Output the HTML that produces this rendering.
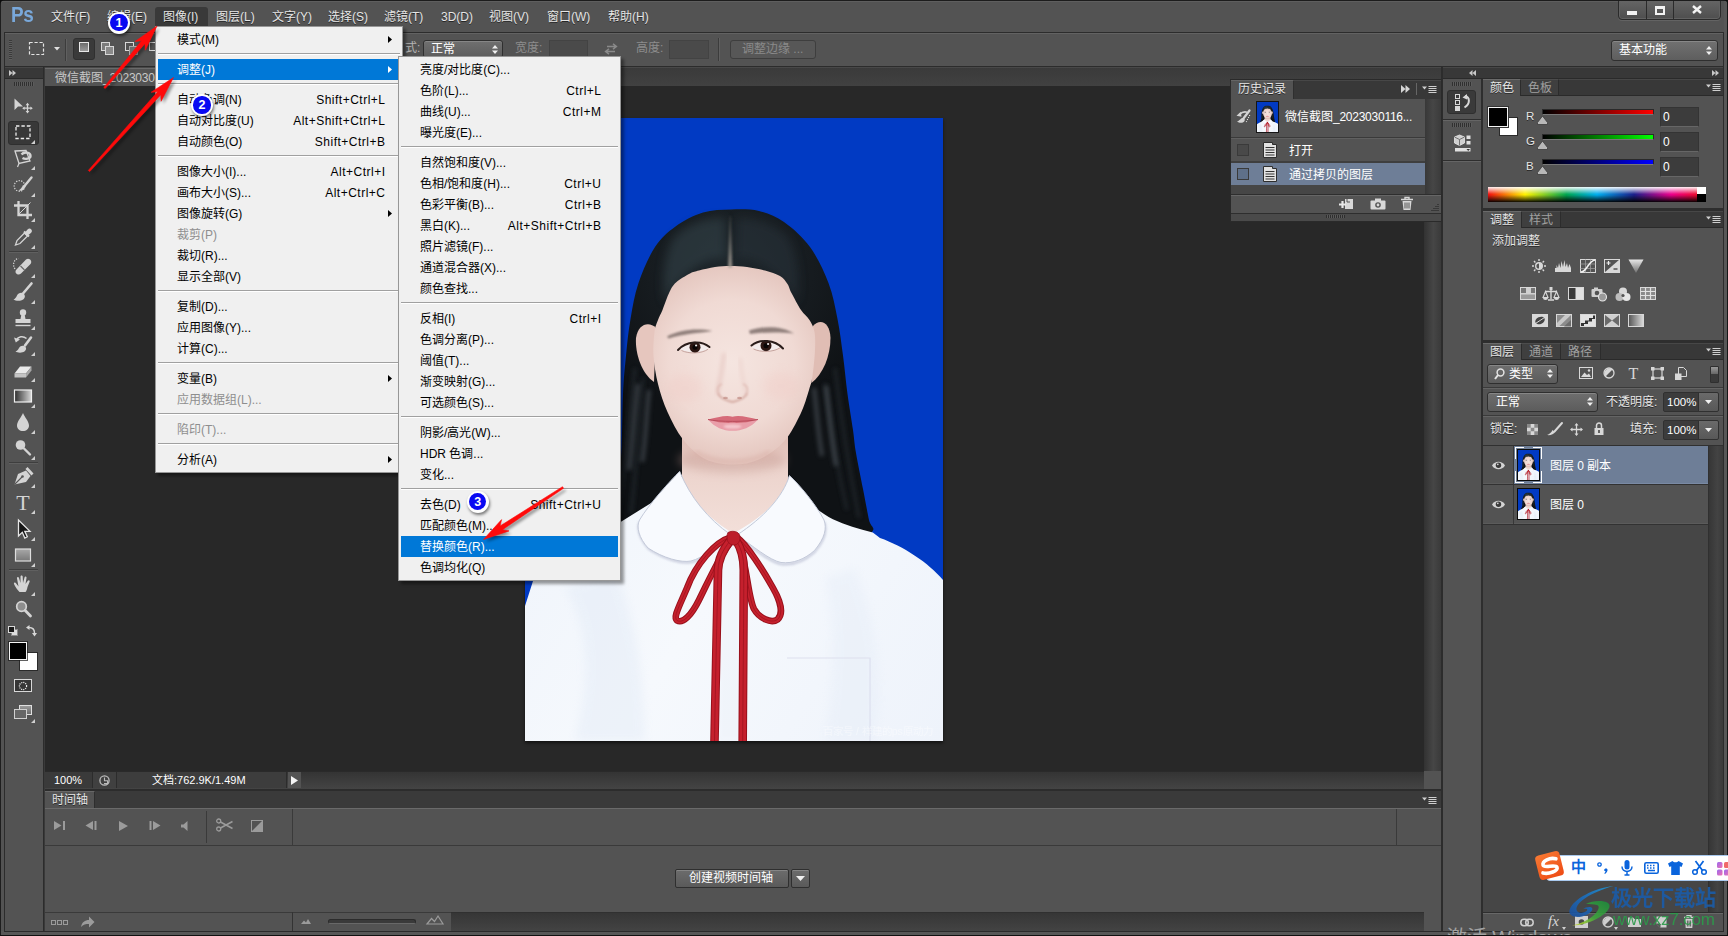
<!DOCTYPE html>
<html lang="zh-CN"><head><meta charset="utf-8"><title>Photoshop</title>
<style>
*{box-sizing:border-box;margin:0;padding:0}
html,body{width:1728px;height:936px;overflow:hidden;background:#535353}
body{position:relative;font-family:"Liberation Sans",sans-serif;font-size:12px;color:#dedede}
.a{position:absolute}
.t{line-height:16px;height:16px;white-space:nowrap}
i{display:inline-block;width:1em;text-align:center;font-style:normal}
.m{color:#e6e6e6;text-shadow:0 1px 0 rgba(0,0,0,.55)}
.k{color:#000}
.d{color:#8e8e8e}
.w{color:#fff}
.g{color:#b4b4b4}
svg{overflow:visible}
</style></head><body>

<!-- p_frame -->
<div class="a" style="left:0px;top:0px;width:1728px;height:936px;background:#535353"></div>
<div class="a" style="left:45px;top:86px;width:1379px;height:685px;background:#282828"></div>
<div class="a" style="left:11px;top:2px;font-size:22px;line-height:26px;font-weight:bold;color:#79a8da;letter-spacing:-0.5px;transform:scaleX(.86);transform-origin:0 0">Ps</div>
<div class="a" style="left:155px;top:7px;width:53px;height:19px;background:#393939;border-radius:3px 3px 0 0"></div>
<div class="a t m" style="left:51px;top:9px;"><i>文</i><i>件</i>(F)</div>
<div class="a t m" style="left:107px;top:9px;"><i>编</i><i>辑</i>(E)</div>
<div class="a t m" style="left:163px;top:9px;"><i>图</i><i>像</i>(I)</div>
<div class="a t m" style="left:216px;top:9px;"><i>图</i><i>层</i>(L)</div>
<div class="a t m" style="left:272px;top:9px;"><i>文</i><i>字</i>(Y)</div>
<div class="a t m" style="left:328px;top:9px;"><i>选</i><i>择</i>(S)</div>
<div class="a t m" style="left:384px;top:9px;"><i>滤</i><i>镜</i>(T)</div>
<div class="a t m" style="left:441px;top:9px;">3D(D)</div>
<div class="a t m" style="left:489px;top:9px;"><i>视</i><i>图</i>(V)</div>
<div class="a t m" style="left:547px;top:9px;"><i>窗</i><i>口</i>(W)</div>
<div class="a t m" style="left:608px;top:9px;"><i>帮</i><i>助</i>(H)</div>
<div class="a" style="left:1618px;top:-3px;width:103px;height:23px;background:linear-gradient(#686868,#4e4e4e);border:1px solid #2b2b2b;border-radius:0 0 4px 4px;box-shadow:inset 0 0 0 1px #626262,0 1px 0 #636363"></div>
<div class="a" style="left:1646px;top:0px;width:1px;height:19px;background:#2b2b2b"></div>
<div class="a" style="left:1673px;top:0px;width:1px;height:19px;background:#2b2b2b"></div>
<div class="a" style="left:1627px;top:11px;width:10px;height:4px;background:#f2f2f2"></div>
<div class="a" style="left:1655px;top:6px;width:10px;height:9px;border:2px solid #f2f2f2;border-top-width:3px"></div>
<svg class="a" style="left:1692px;top:5px;" width="10" height="9" viewBox="0 0 10 9"><path d="M1 1 L9 8 M9 1 L1 8" stroke="#f2f2f2" stroke-width="2.4" fill="none"/></svg>
<div class="a" style="left:4px;top:32px;width:1720px;height:35px;background:#535353;border:1px solid #2c2c2c"></div>
<div class="a" style="left:5px;top:33px;width:1718px;height:1px;background:#626262"></div>
<div class="a" style="left:9px;top:40px;width:3px;height:20px;background:repeating-linear-gradient(#3a3a3a 0 1px,#5e5e5e 1px 2px)"></div>
<svg class="a" style="left:29px;top:42px;" width="15" height="13" viewBox="0 0 15 13"><rect x=".5" y=".5" width="14" height="12" fill="none" stroke="#e4e4e4" stroke-width="1.2" stroke-dasharray="3.2 1.8"/></svg>
<svg class="a" style="left:54px;top:47px;" width="6" height="4" viewBox="0 0 6 4"><path d="M0 0H6L3 3.600Z" fill="#e0e0e0"/></svg>
<div class="a" style="left:65px;top:39px;width:1px;height:22px;background:#3c3c3c"></div>
<div class="a" style="left:66px;top:39px;width:1px;height:22px;background:#606060"></div>
<div class="a" style="left:73px;top:38px;width:22px;height:22px;background:#3a3a3a;border-radius:3px;border:1px solid #303030"></div>
<div class="a" style="left:79px;top:42px;width:10px;height:10px;background:linear-gradient(#6c6c6c,#9a9a9a);border:1px solid #e8e8e8"></div>
<div class="a" style="left:101px;top:42px;width:9px;height:9px;background:#7c7c7c;border:1px solid #d8d8d8"></div>
<div class="a" style="left:105px;top:46px;width:9px;height:9px;background:#8a8a8a;border:1px solid #d8d8d8"></div>
<div class="a" style="left:125px;top:42px;width:9px;height:9px;background:#535353;border:1px solid #d8d8d8"></div>
<div class="a" style="left:129px;top:46px;width:9px;height:9px;background:#6c6c6c;border:1px solid #a8a8a8"></div>
<div class="a" style="left:149px;top:42px;width:9px;height:9px;background:#535353;border:1px solid #d8d8d8"></div>
<div class="a t g" style="left:405px;top:40px;"><i>式</i>:</div>
<div class="a" style="left:423px;top:40px;width:80px;height:18px;background:linear-gradient(#707070,#5d5d5d);border:1px solid #2f2f2f;border-radius:3px;box-shadow:inset 0 1px 0 #868686"></div>
<div class="a t w" style="left:431px;top:41px;"><i>正</i><i>常</i></div>
<svg class="a" style="left:492px;top:45px;" width="6" height="9" viewBox="0 0 6 9"><path d="M0 3.5L3 0L6 3.5ZM0 5.5L3 9L6 5.5Z" fill="#f0f0f0"/></svg>
<div class="a t" style="left:515px;top:40px;color:#8d8d8d"><i>宽</i><i>度</i>:</div>
<div class="a" style="left:549px;top:40px;width:39px;height:19px;background:#4a4a4a;border:1px solid #434343"></div>
<svg class="a" style="left:604px;top:43px;" width="14" height="12" viewBox="0 0 14 12"><path d="M3 3.5H12M9 .8L12.4 3.5L9 6.2M11 8.5H2M5 5.8L1.6 8.5L5 11.2" stroke="#8a8a8a" stroke-width="1.5" fill="none"/></svg>
<div class="a t" style="left:636px;top:40px;color:#8d8d8d"><i>高</i><i>度</i>:</div>
<div class="a" style="left:669px;top:40px;width:40px;height:19px;background:#4a4a4a;border:1px solid #434343"></div>
<div class="a" style="left:718px;top:38px;width:1px;height:23px;background:#3c3c3c"></div>
<div class="a" style="left:719px;top:38px;width:1px;height:23px;background:#606060"></div>
<div class="a" style="left:730px;top:40px;width:86px;height:19px;background:#575757;border:1px solid #3e3e3e;border-radius:3px"></div>
<div class="a t" style="left:742px;top:41px;color:#8a8a8a"><i>调</i><i>整</i><i>边</i><i>缘</i> ...</div>
<div class="a" style="left:1611px;top:40px;width:107px;height:21px;background:linear-gradient(#717171,#5e5e5e);border:1px solid #2f2f2f;border-radius:3px;box-shadow:inset 0 1px 0 #888"></div>
<div class="a t w" style="left:1619px;top:42px;"><i>基</i><i>本</i><i>功</i><i>能</i></div>
<svg class="a" style="left:1706px;top:46px;" width="6" height="9" viewBox="0 0 6 9"><path d="M0 3.5L3 0L6 3.5ZM0 5.5L3 9L6 5.5Z" fill="#f0f0f0"/></svg>
<!-- p_doc -->
<div class="a" style="left:43px;top:67px;width:2px;height:864px;background:#3a3a3a"></div>
<div class="a" style="left:43px;top:67px;width:1px;height:864px;background:#2c2c2c"></div>
<div class="a" style="left:45px;top:67px;width:1396px;height:19px;background:linear-gradient(#3a3a3a,#414141)"></div>
<div class="a" style="left:45px;top:67px;width:1396px;height:1px;background:#484848"></div>
<div class="a" style="left:45px;top:68px;width:130px;height:18px;background:#535353;border-top:1px solid #6a6a6a"></div>
<div class="a t" style="left:55px;top:70px;color:#c8c8c8;letter-spacing:-.2px"><i>微</i><i>信</i><i>截</i><i>图</i>_2023030116...</div>
<div class="a" style="left:1424px;top:86px;width:17px;height:685px;background:linear-gradient(90deg,#323232,#464646 55%,#3a3a3a)"></div>
<div class="a" style="left:1441px;top:67px;width:2px;height:865px;background:#2c2c2c"></div>
<div class="a" style="left:45px;top:771px;width:1379px;height:18px;background:linear-gradient(#333,#444)"></div>
<div class="a" style="left:45px;top:771px;width:1396px;height:1px;background:#2a2a2a"></div>
<div class="a" style="left:45px;top:772px;width:48px;height:16px;background:#3a3a3a;border-right:1px solid #2c2c2c"></div>
<div class="a t w" style="left:54px;top:772px;font-size:11px">100%</div>
<div class="a" style="left:93px;top:772px;width:23px;height:16px;background:#404040"></div>
<svg class="a" style="left:99px;top:775px;" width="11" height="11" viewBox="0 0 11 11"><circle cx="5.5" cy="5.5" r="4.6" fill="none" stroke="#bdbdbd" stroke-width="1.3"/><path d="M5.5 2.5V5.8H8.6V8.6H5" fill="none" stroke="#bdbdbd" stroke-width="1.1"/></svg>
<div class="a" style="left:116px;top:772px;width:171px;height:16px;background:#3d3d3d;border-left:1px solid #2c2c2c;border-right:1px solid #2c2c2c"></div>
<div class="a t w" style="left:152px;top:772px;font-size:11px"><i>文</i><i>档</i>:762.9K/1.49M</div>
<div class="a" style="left:288px;top:772px;width:13px;height:16px;background:#535353"></div>
<svg class="a" style="left:291px;top:776px;" width="7" height="9" viewBox="0 0 7 9"><path d="M0 0L7 4.5L0 9Z" fill="#f4f4f4"/></svg>
<div class="a" style="left:1424px;top:771px;width:17px;height:18px;background:#535353"></div>
<div class="a" style="left:45px;top:789px;width:1396px;height:2px;background:#2c2c2c"></div>
<div class="a" style="left:1230px;top:79px;width:212px;height:143px;background:#2a2a2a"></div>
<div class="a" style="left:1231px;top:80px;width:210px;height:19px;background:#383838;border-top:1px solid #474747"></div>
<div class="a" style="left:1231px;top:80px;width:63px;height:19px;background:#535353;border-right:1px solid #2f2f2f;border-top:1px solid #656565"></div>
<div class="a t m" style="left:1238px;top:81px;"><i>历</i><i>史</i><i>记</i><i>录</i></div>
<svg class="a" style="left:1401px;top:85px;" width="9" height="8" viewBox="0 0 9 8"><path d="M0 0L4.5 4L0 8ZM4.5 0L9 4L4.5 8Z" fill="#d6d6d6"/></svg>
<div class="a" style="left:1416px;top:83px;width:1px;height:12px;background:#666"></div>
<svg class="a" style="left:1422px;top:86px;" width="15" height="8" viewBox="0 0 15 8"><path d="M0 .5H5L2.500 3.500Z" fill="#cfcfcf"/><path d="M6.500 .5H14.500M6.500 2.500H14.500M6.500 4.500H14.500M6.500 6.500H14.500" stroke="#cfcfcf" stroke-width="1"/></svg>
<div class="a" style="left:1231px;top:99px;width:194px;height:96px;background:#464646"></div>
<div class="a" style="left:1231px;top:99px;width:194px;height:86px;background:#535353"></div>
<div class="a" style="left:1425px;top:99px;width:16px;height:96px;background:linear-gradient(90deg,#383838,#464646 50%,#3b3b3b)"></div>
<div class="a" style="left:1231px;top:137px;width:194px;height:2px;background:#3a3a3a;border-bottom:1px solid #606060"></div>
<svg class="a" style="left:1236px;top:109px;" width="16" height="16" viewBox="0 0 16 16"><path d="M13.500 1.500L7.800 9" stroke="#d4d4d4" stroke-width="2.300" stroke-linecap="round"/><path d="M1 12.500C3 12 4 10.500 5.500 9.300C7.200 8.200 9.300 9.500 8.700 11.500C8 13.800 4 14.800 1 12.500Z" fill="#d4d4d4"/><path d="M3.500 5.500C6 3 9 2.600 11 3.200" stroke="#d4d4d4" stroke-width="1.700" fill="none"/><path d="M.5 6.800L4.800 2.800L5.500 7.800Z" fill="#d4d4d4"/><path d="M13.800 6L10 13.500" stroke="#e8e8e8" stroke-width="1.100" stroke-dasharray="1 1.300"/></svg>
<svg class="a" style="left:1256px;top:101px" width="23" height="32" viewBox="0 0 418 623" preserveAspectRatio="none"><use href="#photo"/></svg>
<svg class="a" style="left:1256px;top:101px;" width="23" height="32" viewBox="0 0 23 32"><path d="M11.400 21.700L9.300 25M11.400 21.700L13.400 25" stroke="#c21a2a" stroke-width=".6" fill="none" opacity=".7"/></svg>
<div class="a" style="left:1256px;top:101px;width:23px;height:32px;border:1px solid #151515"></div>
<div class="a t w" style="left:1285px;top:109px;letter-spacing:-.25px"><i>微</i><i>信</i><i>截</i><i>图</i>_2023030116...</div>
<div class="a" style="left:1237px;top:144px;width:12px;height:12px;background:#494949;border:1px solid #3a3a3a"></div>
<svg class="a" style="left:1263px;top:142px;" width="14" height="16" viewBox="0 0 14 16"><path d="M.5 .5H9.5V2.500H13.5V15.5H.5Z" fill="#e2e2e2" stroke="#2e2e2e"/><path d="M2.500 5.500H11.5M2.500 8H11.5M2.500 10.500H11.5M2.500 13H11.5" stroke="#333" stroke-width="1"/></svg>
<div class="a t w" style="left:1289px;top:143px;"><i>打</i><i>开</i></div>
<div class="a" style="left:1231px;top:163px;width:194px;height:22px;background:#6e7e97"></div>
<div class="a" style="left:1237px;top:168px;width:12px;height:12px;background:#5f7089;border:1px solid #3a3a3a"></div>
<svg class="a" style="left:1263px;top:166px;" width="14" height="16" viewBox="0 0 14 16"><path d="M.5 .5H9.5V2.500H13.5V15.5H.5Z" fill="#e2e2e2" stroke="#2e2e2e"/><path d="M2.500 5.500H11.5M2.500 8H11.5M2.500 10.500H11.5M2.500 13H11.5" stroke="#333" stroke-width="1"/></svg>
<div class="a t w" style="left:1289px;top:167px;"><i>通</i><i>过</i><i>拷</i><i>贝</i><i>的</i><i>图</i><i>层</i></div>
<div class="a" style="left:1231px;top:161px;width:194px;height:2px;background:#3f3f3f"></div>
<div class="a" style="left:1231px;top:194px;width:210px;height:1px;background:#2e2e2e"></div>
<div class="a" style="left:1231px;top:195px;width:210px;height:18px;background:#535353;border-top:1px solid #666"></div>
<svg class="a" style="left:1339px;top:198px;" width="15" height="12" viewBox="0 0 15 12"><path d="M6 1H14V11H6V7" fill="#d8d8d8"/><path d="M3.500 3V10M0 6.500H7" stroke="#e8e8e8" stroke-width="2.2"/><path d="M8 1V4H11" stroke="#535353" fill="none"/></svg>
<svg class="a" style="left:1370px;top:198px;" width="16" height="12" viewBox="0 0 16 12"><rect x=".5" y="2.500" width="15" height="9" rx="1" fill="#d8d8d8"/><rect x="5" y=".5" width="6" height="3" fill="#d8d8d8"/><circle cx="8" cy="7" r="2.800" fill="#535353"/><circle cx="8" cy="7" r="1.400" fill="#d8d8d8"/></svg>
<svg class="a" style="left:1401px;top:197px;" width="12" height="13" viewBox="0 0 12 13"><path d="M0 2.500H12M4 2V.5H8V2" stroke="#d8d8d8" stroke-width="1.4" fill="none"/><path d="M1.5 4H10.5L9.500 13H2.500Z" fill="#d8d8d8"/><path d="M4 5.500V11.5M6 5.500V11.5M8 5.500V11.5" stroke="#535353" stroke-width="1"/></svg>
<svg class="a" style="left:1430px;top:203px;" width="9" height="9" viewBox="0 0 9 9"><path d="M8 1V2M6 3V4M8 3V4M4 5V6M6 5V6M8 5V6M2 7V8M4 7V8M6 7V8M8 7V8" stroke="#1e1e1e" stroke-width="1"/></svg>
<div class="a" style="left:1231px;top:213px;width:210px;height:8px;background:#4a4a4a;border-top:1px solid #2e2e2e"></div>
<div class="a" style="left:1326px;top:215px;width:19px;height:3px;background:repeating-linear-gradient(90deg,#2e2e2e 0 1px,#5a5a5a 1px 2px)"></div>
<!-- p_photo -->
<svg width="0" height="0" style="position:absolute;left:0;top:0"><defs>
<radialGradient id="gF" cx="207" cy="245" r="105" gradientUnits="userSpaceOnUse"><stop offset="0" stop-color="#f5e5e0"/><stop offset=".6" stop-color="#f0dad4"/><stop offset="1" stop-color="#e3c4bc"/></radialGradient>
<linearGradient id="gN" x1="0" y1="325" x2="0" y2="415" gradientUnits="userSpaceOnUse"><stop offset="0" stop-color="#e2c1b9"/><stop offset=".3" stop-color="#ecd4cd"/><stop offset="1" stop-color="#f3dfd9"/></linearGradient>
<linearGradient id="gS" x1="0" y1="350" x2="418" y2="623" gradientUnits="userSpaceOnUse"><stop offset="0" stop-color="#eff4fb"/><stop offset=".45" stop-color="#f6f9fd"/><stop offset="1" stop-color="#eef3fb"/></linearGradient>
<radialGradient id="gH" cx="205" cy="150" r="150" gradientUnits="userSpaceOnUse"><stop offset="0" stop-color="#1e262b"/><stop offset=".55" stop-color="#161b1f"/><stop offset="1" stop-color="#0f1215"/></radialGradient>
<linearGradient id="gP" x1="0" y1="100" x2="0" y2="148" gradientUnits="userSpaceOnUse"><stop offset="0" stop-color="#7c7a72" stop-opacity=".25"/><stop offset="1" stop-color="#a39c94" stop-opacity=".85"/></linearGradient><linearGradient id="gR" x1="0" x2="1" y1="0" y2="0"><stop offset="0" stop-color="#a3111d"/><stop offset=".5" stop-color="#d82c3a"/><stop offset="1" stop-color="#a3111d"/></linearGradient>
<filter id="bl2" x="-30%" y="-30%" width="160%" height="160%"><feGaussianBlur stdDeviation="2.2"/></filter>
<filter id="bl5" x="-50%" y="-50%" width="200%" height="200%"><feGaussianBlur stdDeviation="5"/></filter>
<filter id="blp" filterUnits="userSpaceOnUse" x="190" y="85" width="34" height="75"><feGaussianBlur stdDeviation=".9"/></filter><filter id="bl1" x="-30%" y="-30%" width="160%" height="160%"><feGaussianBlur stdDeviation=".8"/></filter>
<symbol id="photo" viewBox="0 0 418 623" preserveAspectRatio="none">
<rect width="418" height="623" fill="#013ac3"/>
<path d="M206.0 91.5C215.3 91.2 225.2 90.9 234.0 93.0C242.8 95.1 250.5 98.0 259.0 104.0C267.5 110.0 277.6 118.8 285.0 129.0C292.4 139.2 298.9 153.0 303.5 165.0C308.1 177.0 310.1 188.9 312.5 201.0C314.9 213.1 316.3 225.0 318.0 237.5C319.7 250.0 320.8 263.6 322.5 276.0C324.2 288.4 326.6 302.2 328.0 312.0C329.4 321.8 329.3 325.2 331.0 335.0C332.7 344.8 335.8 359.8 338.0 371.0C340.2 382.2 342.5 394.8 344.0 402.0C345.5 409.2 351.0 409.3 347.0 414.0C343.0 418.7 343.3 424.8 320.0 430.0C296.7 435.2 243.7 445.0 207.0 445.0C170.3 445.0 122.5 434.8 100.0 430.0C77.5 425.2 75.3 421.7 72.0 416.0C68.7 410.3 77.0 404.0 80.0 396.0C83.0 388.0 87.3 377.3 90.0 368.0C92.7 358.7 94.7 355.3 96.0 340.0C97.3 324.7 97.2 293.1 98.0 276.0C98.8 258.9 99.8 250.0 101.0 237.5C102.2 225.0 103.4 213.1 105.5 201.0C107.6 188.9 109.4 177.0 113.5 165.0C117.6 153.0 123.8 138.4 130.0 129.0C136.2 119.6 142.5 114.2 150.5 108.4C158.5 102.7 168.8 97.3 178.0 94.5C187.2 91.7 196.7 91.8 206.0 91.5Z" fill="url(#gH)"/>
<path d="M150 118C165 104 185 99 200 100L201 140C185 138 160 150 140 185C136 160 140 132 150 118Z" fill="#34444c" opacity=".55" filter="url(#bl5)"/>
<path d="M262 118C247 104 227 99 212 100L211 140C227 138 252 150 272 185C276 160 272 132 262 118Z" fill="#2a363d" opacity=".5" filter="url(#bl5)"/>
<path d="M110 250C104 300 100 340 92 400M118 260C112 320 112 350 106 395M310 250C316 300 322 340 334 400M300 265C308 320 312 350 322 392" stroke="#2a3338" stroke-width="3" fill="none" opacity=".6" filter="url(#bl2)"/>
<path d="M113 266C109 295 108 320 104 352M124 272C121 298 121 320 117 344M289 270C292 295 293 315 297 338M301 268C304 295 306 320 311 348" stroke="#5a626a" stroke-width="4.500" fill="none" opacity=".5" filter="url(#bl2)"/>
<path d="M157 300V425H263V300Z" fill="url(#gN)"/>
<ellipse cx="207" cy="342" rx="54" ry="13" fill="#c0938a" opacity=".38" filter="url(#bl5)"/>
<path d="M0 488L8 463C32 437 78 414 96.400 403.400L131 382L154.700 353.400C160 374 180 399 208.500 415.500C242 397 260 377 264.400 357.600C268 368 274 378 281.500 383.700C292 391.500 300 397 307.900 401.300C320 407 334 411 347.800 414.500L355 420C378 428 404 445 418 462V623H0Z" fill="url(#gS)"/>
<path d="M40 470C70 520 60 580 50 623H120C120 560 110 500 90 450Z" fill="#dfe8f5" opacity=".4" filter="url(#bl5)"/>
<path d="M330 450C350 500 360 560 350 623H300C310 560 310 500 300 460Z" fill="#e2eaf6" opacity=".35" filter="url(#bl5)"/>
<path d="M193 425V623H216V425Z" fill="#e8eef8" opacity=".25" filter="url(#bl2)"/>
<path d="M262 540H345V623" fill="none" stroke="#dde0ee" stroke-width="1.2"/>
<path d="M114.500 404C112 412 116 422 124 431C139 441 157 446 167 444C179 441 193 429 205 418M299 404C302 412 300 422 289.500 434C280 442.500 268 447.500 256 446C244 443.500 228 429.500 211 418" fill="none" stroke="#b9bdd2" stroke-width="2.500" opacity=".7" filter="url(#bl1)"/>
<path d="M154.700 353.400C146 362 124 386 114.500 402C111 409 114 420 123 430C138 440 156 445 166 443C178 440 192 428 206 417C183 401 165 379 154.700 353.400Z" fill="#f8fafe" stroke="#c3c9d9" stroke-width="1"/>
<path d="M264.400 357.600C274 366 292 388 299 402C302 410 300 420 289.500 432.500C280 441 268 446 256 444.500C244 442 228 428 212 417C238 400 258 379 264.400 357.600Z" fill="#f8fafe" stroke="#c3c9d9" stroke-width="1"/>
<path d="M131 210C124 203 113 206 111 220C110 236 117 256 129 264Z" fill="#e6c6be"/>
<path d="M288 208C295 200 305 204 305.500 220C305.500 238 298 256 286.500 265Z" fill="#e0bdb4"/>
<path d="M205.5 148.0C210.8 148.0 216.2 148.2 222.0 149.0C227.8 149.8 234.5 151.0 240.0 152.5C245.5 154.0 251.2 155.8 255.0 158.0C258.8 160.2 260.6 163.2 262.5 166.0C264.4 168.8 264.2 170.7 266.5 175.0C268.8 179.3 273.0 187.5 276.0 192.0C279.0 196.5 282.2 198.3 284.5 202.0C286.8 205.7 288.6 209.0 289.5 214.0C290.4 219.0 290.3 224.7 290.0 232.0C289.7 239.3 288.5 251.3 287.5 258.0C286.5 264.7 286.0 265.7 284.0 272.0C282.0 278.3 279.7 287.4 275.5 296.0C271.3 304.6 265.9 315.9 259.0 323.5C252.1 331.1 242.6 337.7 234.0 341.5C225.4 345.3 216.5 346.6 207.5 346.5C198.5 346.4 188.2 345.2 180.0 341.0C171.8 336.8 164.2 329.3 158.0 321.5C151.8 313.7 146.7 303.2 142.5 294.0C138.3 284.8 135.3 275.3 133.0 266.0C130.7 256.7 129.1 246.7 128.5 238.0C127.9 229.3 128.8 220.0 129.5 214.0C130.2 208.0 131.7 205.7 133.0 202.0C134.3 198.3 135.6 196.7 137.5 192.0C139.4 187.3 142.2 178.6 144.5 174.0C146.8 169.4 147.6 167.6 151.0 164.5C154.4 161.4 161.2 157.5 165.0 155.5C168.8 153.5 169.8 153.6 174.0 152.5C178.2 151.4 184.8 149.8 190.0 149.0C195.2 148.2 200.2 148.0 205.5 148.0Z" fill="url(#gF)"/>
<path d="M204.500 98L205.700 98L207.300 149.500L203 149.500Z" fill="url(#gP)" filter="url(#blp)"/>
<ellipse cx="160" cy="270" rx="18" ry="14" fill="#f0bdb8" opacity=".2" filter="url(#bl5)"/><ellipse cx="256" cy="268" rx="18" ry="14" fill="#f0bdb8" opacity=".2" filter="url(#bl5)"/>
<path d="M142 218.500C155 211.500 172 210 187.500 213C174 215 157 216 143.500 220.500Z" fill="#6b5c58" opacity=".72" filter="url(#bl1)"/>
<path d="M224 212.500C238 208 256 207.500 269 215.500C256 214 240 214 225 216Z" fill="#6b5c58" opacity=".72" filter="url(#bl1)"/>
<path d="M155.0 231.0C161.5 224.0 176.5 223.5 183.5 230.5C176.5 235.0 162.5 235.5 155.0 231.0Z" fill="#f3ecec"/>
<circle cx="170.0" cy="229.2" r="5.500" fill="#2c1612"/><circle cx="170.0" cy="229.2" r="2.500" fill="#080404"/><circle cx="171.1" cy="227.5" r="1.100" fill="#fff" opacity=".9"/>
<path d="M153.0 232.0C161.5 223.0 176.5 222.3 184.5 229.0" stroke="#2a1d1b" stroke-width="2" fill="none" stroke-linecap="round"/>
<path d="M156.5 232.5C163.5 236.0 176.5 235.8 183.0 231.3" stroke="#b48e88" stroke-width=".9" fill="none" opacity=".8"/>
<path d="M227.0 229.5C233.5 222.5 248.5 222 255.5 229C248.5 233.5 234.5 234 227.0 229.5Z" fill="#f3ecec"/>
<circle cx="241.0" cy="227.7" r="5.500" fill="#2c1612"/><circle cx="241.0" cy="227.7" r="2.500" fill="#080404"/><circle cx="243.1" cy="226" r="1.100" fill="#fff" opacity=".9"/>
<path d="M258.0 230.5C249.5 221.5 234.5 220.8 226.5 227.5" stroke="#2a1d1b" stroke-width="2" fill="none" stroke-linecap="round"/>
<path d="M228.5 231C235.5 234.5 248.5 234.3 255.0 229.8" stroke="#b48e88" stroke-width=".9" fill="none" opacity=".8"/>
<path d="M193 275C195 281 200.500 281.500 204 283C206 284 209 284 211 283C214.500 281.500 220 281 222 275" stroke="#cfa198" stroke-width="1.500" fill="none" filter="url(#bl1)"/>
<path d="M199 235C197 255 194 268 192 276" stroke="#e6c8c2" stroke-width="3" fill="none" filter="url(#bl2)"/>
<path d="M215 240C216.500 256 219 268 221.500 276" stroke="#ecd2cc" stroke-width="2.500" fill="none" filter="url(#bl2)"/><path d="M194 277C191 272 193 267 197 266M221 277C224 272 222 267 218 266" stroke="#dcb4ac" stroke-width="1.200" fill="none" filter="url(#bl1)"/>
<ellipse cx="200.500" cy="280" rx="2.400" ry="1.200" fill="#b98078" opacity=".6"/><ellipse cx="214.500" cy="280" rx="2.400" ry="1.200" fill="#b98078" opacity=".6"/>
<path d="M183 301.500C192 304 200 305 207.500 304.500C215 305 224 304 233 301.500C226 309.500 217 312.800 207.500 312.800C198 312.800 190 309.500 183 301.500Z" fill="#e99ea9"/>
<path d="M183 301.500C192 299.500 201 296.800 207.500 298.800C214 296.800 224 299.500 233 301.500C224 304.500 215 305.200 207.500 304.800C200 305.200 192 304.500 183 301.500Z" fill="#d66b79"/>
<path d="M183 301.500C193 304 222 304 233 301.500" stroke="#b94c5c" stroke-width="1" fill="none"/>
<ellipse cx="207.500" cy="308.500" rx="9" ry="2" fill="#f8d0d6" opacity=".85" filter="url(#bl1)"/>
<path d="M170 334C190 347 225 347 245 334" stroke="#d9b0a7" stroke-width="4" fill="none" opacity=".6" filter="url(#bl2)"/>
<path d="M205.500 419.500C190 424 171 446 162 470C154 489 148 499 152 502.500C158 506 166.500 497 174 482C184 462 195 437 206 423.500" stroke="#98101b" stroke-width="6.6" fill="none" stroke-linecap="round"/>
<path d="M205.500 419.500C190 424 171 446 162 470C154 489 148 499 152 502.500C158 506 166.500 497 174 482C184 462 195 437 206 423.500" stroke="#c5202d" stroke-width="4.6" fill="none" stroke-linecap="round"/>
<path d="M205.500 419.500C190 424 171 446 162 470C154 489 148 499 152 502.500C158 506 166.500 497 174 482C184 462 195 437 206 423.500" stroke="#a01420" stroke-width="1" fill="none" opacity=".85"/>
<path d="M212 419.500C222 427 238 452 248 470C256 484 258.500 496 252.500 501.500C246 506 234 500 229 491C223 479 222.500 450 213.500 423" stroke="#98101b" stroke-width="6.6" fill="none" stroke-linecap="round"/>
<path d="M212 419.500C222 427 238 452 248 470C256 484 258.500 496 252.500 501.500C246 506 234 500 229 491C223 479 222.500 450 213.500 423" stroke="#c5202d" stroke-width="4.6" fill="none" stroke-linecap="round"/>
<path d="M212 419.500C222 427 238 452 248 470C256 484 258.500 496 252.500 501.500C246 506 234 500 229 491C223 479 222.500 450 213.500 423" stroke="#a01420" stroke-width="1" fill="none" opacity=".85"/>
<path d="M205 423C198 432 193.500 440 193 452C192 500 190.500 560 189.500 623" stroke="#98101b" stroke-width="8.6" fill="none" stroke-linecap="round"/>
<path d="M205 423C198 432 193.500 440 193 452C192 500 190.500 560 189.500 623" stroke="#c5202d" stroke-width="6.6" fill="none" stroke-linecap="round"/>
<path d="M205 423C198 432 193.500 440 193 452C192 500 190.500 560 189.500 623" stroke="#a01420" stroke-width="1" fill="none" opacity=".85"/>
<path d="M211.500 423C217 432 218.800 440 218.800 452C218.800 500 218 560 217.700 623" stroke="#98101b" stroke-width="8.6" fill="none" stroke-linecap="round"/>
<path d="M211.500 423C217 432 218.800 440 218.800 452C218.800 500 218 560 217.700 623" stroke="#c5202d" stroke-width="6.6" fill="none" stroke-linecap="round"/>
<path d="M211.500 423C217 432 218.800 440 218.800 452C218.800 500 218 560 217.700 623" stroke="#a01420" stroke-width="1" fill="none" opacity=".85"/>
<path d="M203 414.500C206.500 412.500 212 413 214 416C216 419.500 215 424.500 211.500 426.500C207.500 428 203.500 426 202.500 422.500C201.800 419.500 201.800 416.500 203 414.500Z" fill="#bd1d2a" stroke="#98101c" stroke-width=".8"/>
<text x="298" y="617" font-family="Liberation Sans,sans-serif" font-size="10.500" fill="#fff" opacity=".4">百家号 / 祥建的ps原动力</text>
</symbol></defs></svg>
<div class="a" style="left:525px;top:118px;width:418px;height:623px;box-shadow:0 2px 3px rgba(0,0,0,.55);background:#013ac3"></div>
<svg class="a" style="left:525px;top:118px" width="418" height="623" viewBox="0 0 418 623"><use href="#photo"/></svg>
<!-- p_tools -->
<div class="a" style="left:4px;top:67px;width:1px;height:865px;background:#2c2c2c"></div>
<div class="a" style="left:5px;top:67px;width:38px;height:865px;background:#535353"></div>
<div class="a" style="left:5px;top:67px;width:38px;height:12px;background:#383838;border-top:1px solid #474747;border-bottom:1px solid #2a2a2a"></div>
<svg class="a" style="left:9px;top:70px;" width="7" height="6" viewBox="0 0 7 6"><path d="M0 0L3.500 3L0 6ZM3.500 0L7 3L3.500 6Z" fill="#c8c8c8"/></svg>
<div class="a" style="left:14px;top:82px;width:20px;height:4px;background:repeating-linear-gradient(90deg,#303030 0 1px,#5c5c5c 1px 2px)"></div>
<div class="a" style="left:9px;top:251px;width:29px;height:1px;background:#3e3e3e"></div>
<div class="a" style="left:9px;top:252px;width:29px;height:1px;background:#606060"></div>
<div class="a" style="left:9px;top:462px;width:29px;height:1px;background:#3e3e3e"></div>
<div class="a" style="left:9px;top:463px;width:29px;height:1px;background:#606060"></div>
<div class="a" style="left:9px;top:569px;width:29px;height:1px;background:#3e3e3e"></div>
<div class="a" style="left:9px;top:570px;width:29px;height:1px;background:#606060"></div>
<div class="a" style="left:8px;top:121px;width:31px;height:24px;background:#383838;border-radius:3px;border:1px solid #2f2f2f"></div>
<svg class="a" style="left:11px;top:94px;" width="24" height="24" viewBox="0 0 24 24"><path d="M3.500 4.500V16L7 12.500H12Z" fill="#d4d4d4"/><path d="M16.500 10.500V18M12.800 14.200H20.200" stroke="#d4d4d4" stroke-width="1.300" fill="none"/><path d="M16.500 8.800L14.600 11.300H18.400ZM16.500 19.600L14.600 17.100H18.400ZM11.200 14.200L13.600 12.400V16ZM21.800 14.200L19.400 12.400V16Z" fill="#d4d4d4"/></svg>
<svg class="a" style="left:11px;top:120px;" width="24" height="24" viewBox="0 0 24 24"><rect x="5" y="6" width="14" height="12.500" fill="none" stroke="#ececec" stroke-width="1.300" stroke-dasharray="3.400 2"/></svg>
<svg class="a" style="left:31px;top:140px;" width="4" height="4" viewBox="0 0 4 4"><path d="M4 0V4H0Z" fill="#d0d0d0"/></svg>
<svg class="a" style="left:11px;top:146px;" width="24" height="24" viewBox="0 0 24 24"><path d="M4 5L15 4.500L19 15L8 17.500Z" fill="none" stroke="#d4d4d4" stroke-width="1.300"/><path d="M10.500 8.500C13 5.500 19.500 6 19.500 10C19.500 13 14 13.500 11.500 12" fill="none" stroke="#d4d4d4" stroke-width="2.400"/><path d="M8 17.500L6.500 21" stroke="#d4d4d4" stroke-width="1.200"/></svg>
<svg class="a" style="left:31px;top:166px;" width="4" height="4" viewBox="0 0 4 4"><path d="M4 0V4H0Z" fill="#d0d0d0"/></svg>
<svg class="a" style="left:11px;top:173px;" width="24" height="24" viewBox="0 0 24 24"><circle cx="8.500" cy="13" r="5.300" fill="none" stroke="#d4d4d4" stroke-width="1.200" stroke-dasharray="1.300 1.300"/><path d="M20.500 4.500L13.500 13" stroke="#d4d4d4" stroke-width="2.400" stroke-linecap="round"/><path d="M7.500 17.500C10 18.500 13.500 17 14.500 13.500L12 12C11 14.500 9.500 16.500 7.500 17.500Z" fill="#d4d4d4"/></svg>
<svg class="a" style="left:31px;top:193px;" width="4" height="4" viewBox="0 0 4 4"><path d="M4 0V4H0Z" fill="#d0d0d0"/></svg>
<svg class="a" style="left:11px;top:198px;" width="24" height="24" viewBox="0 0 24 24"><path d="M7.500 3V17H21M3 7.500H16.500V21" fill="none" stroke="#d4d4d4" stroke-width="2.300"/><path d="M19.500 4.500L8 16" stroke="#d4d4d4" stroke-width="1"/></svg>
<svg class="a" style="left:31px;top:218px;" width="4" height="4" viewBox="0 0 4 4"><path d="M4 0V4H0Z" fill="#d0d0d0"/></svg>
<svg class="a" style="left:11px;top:225px;" width="24" height="24" viewBox="0 0 24 24"><path d="M4.500 20L6 15.500L13.500 8L16.500 11L9 18.500Z" fill="none" stroke="#d4d4d4" stroke-width="1.300"/><path d="M13 6.500L18 11.500M14.500 8.500L17.500 5C18.800 3.700 20.800 5.700 19.500 7L16 10Z" stroke="#d4d4d4" stroke-width="2" fill="#d4d4d4"/></svg>
<svg class="a" style="left:31px;top:245px;" width="4" height="4" viewBox="0 0 4 4"><path d="M4 0V4H0Z" fill="#d0d0d0"/></svg>
<svg class="a" style="left:11px;top:254px;" width="24" height="24" viewBox="0 0 24 24"><path d="M5.500 15.500L15 5.500C18 3 22 7 19.500 10L10 19.500C7 22.500 2.500 18.500 5.500 15.500Z" fill="#d4d4d4"/><path d="M9.500 12L13.500 16M8.500 15.500H8.600M11 13.500H11.100M13 11.500H13.100" stroke="#6a6a6a" stroke-width="1.200"/><path d="M4 15C1 11 3 5 7.500 4.500" fill="none" stroke="#d4d4d4" stroke-width="1.200" stroke-dasharray="1.300 1.300"/></svg>
<svg class="a" style="left:31px;top:274px;" width="4" height="4" viewBox="0 0 4 4"><path d="M4 0V4H0Z" fill="#d0d0d0"/></svg>
<svg class="a" style="left:11px;top:280px;" width="24" height="24" viewBox="0 0 24 24"><path d="M20.500 3.500L12 13.500" stroke="#d4d4d4" stroke-width="2.600" stroke-linecap="round"/><path d="M2.500 19.500C4 19 5 17.500 6 15.500C7.500 12.500 11 12 13 14C15 16.500 13.500 19.500 10 20.500C7 21.200 4 20.500 2.500 19.500Z" fill="#d4d4d4"/></svg>
<svg class="a" style="left:31px;top:300px;" width="4" height="4" viewBox="0 0 4 4"><path d="M4 0V4H0Z" fill="#d0d0d0"/></svg>
<svg class="a" style="left:11px;top:306px;" width="24" height="24" viewBox="0 0 24 24"><circle cx="12" cy="6.500" r="3.200" fill="#d4d4d4"/><path d="M10.500 8H13.500L14.500 13H19.500V17H4.500V13H9.500Z" fill="#d4d4d4"/><path d="M4.500 19.500H19.500" stroke="#d4d4d4" stroke-width="1.400"/></svg>
<svg class="a" style="left:31px;top:326px;" width="4" height="4" viewBox="0 0 4 4"><path d="M4 0V4H0Z" fill="#d0d0d0"/></svg>
<svg class="a" style="left:11px;top:332px;" width="24" height="24" viewBox="0 0 24 24"><path d="M20 5.500L14 13.500" stroke="#d4d4d4" stroke-width="2.600" stroke-linecap="round"/><path d="M4.500 19.500C6 19 7 17.800 8 16C9.500 13.500 12.500 13 14.500 15C16 17 14.500 19.500 11.500 20.300C9 21 6 20.500 4.500 19.500Z" fill="#d4d4d4"/><path d="M15.500 6.500C12 3.500 7 4.500 5.500 8" fill="none" stroke="#d4d4d4" stroke-width="1.600"/><path d="M3 5.500L4.800 10.500L9 7.500Z" fill="#d4d4d4"/></svg>
<svg class="a" style="left:31px;top:352px;" width="4" height="4" viewBox="0 0 4 4"><path d="M4 0V4H0Z" fill="#d0d0d0"/></svg>
<svg class="a" style="left:11px;top:358px;" width="24" height="24" viewBox="0 0 24 24"><path d="M3.500 15.500L9 8.500H20.500L15 15.500Z" fill="#eaeaea"/><path d="M3.500 15.500H15V19.500H3.500Z" fill="#c4c4c4"/><path d="M15 15.500L20.500 8.500V12.500L15 19.500Z" fill="#a6a6a6"/></svg>
<svg class="a" style="left:31px;top:378px;" width="4" height="4" viewBox="0 0 4 4"><path d="M4 0V4H0Z" fill="#d0d0d0"/></svg>
<svg class="a" style="left:11px;top:384px;" width="24" height="24" viewBox="0 0 24 24"><defs><linearGradient id="tg" x1="0" x2="1"><stop offset="0" stop-color="#2e2e2e"/><stop offset="1" stop-color="#d8d8d8"/></linearGradient></defs><rect x="3.500" y="6" width="17" height="12" fill="url(#tg)" stroke="#f0f0f0" stroke-width="1.200"/></svg>
<svg class="a" style="left:31px;top:404px;" width="4" height="4" viewBox="0 0 4 4"><path d="M4 0V4H0Z" fill="#d0d0d0"/></svg>
<svg class="a" style="left:11px;top:410px;" width="24" height="24" viewBox="0 0 24 24"><path d="M12 3C13.500 7 18 11.500 18 15.500C18 19 15.300 21 12 21C8.700 21 6 19 6 15.500C6 11.500 10.500 7 12 3Z" fill="#d4d4d4"/></svg>
<svg class="a" style="left:31px;top:430px;" width="4" height="4" viewBox="0 0 4 4"><path d="M4 0V4H0Z" fill="#d0d0d0"/></svg>
<svg class="a" style="left:11px;top:436px;" width="24" height="24" viewBox="0 0 24 24"><circle cx="9.500" cy="9" r="4.800" fill="#d4d4d4"/><path d="M13 12.500L19 18.500" stroke="#d4d4d4" stroke-width="2.400" stroke-linecap="round"/></svg>
<svg class="a" style="left:31px;top:456px;" width="4" height="4" viewBox="0 0 4 4"><path d="M4 0V4H0Z" fill="#d0d0d0"/></svg>
<svg class="a" style="left:11px;top:464px;" width="24" height="24" viewBox="0 0 24 24"><path d="M3.500 20.500L7 10L15 6.500L19.500 12L15 18Z" fill="#d4d4d4"/><path d="M3.500 20.500L11 13" stroke="#555" stroke-width="1.100"/><circle cx="11.500" cy="12.500" r="1.300" fill="#555"/><path d="M15.500 4L21.500 10.500" stroke="#d4d4d4" stroke-width="2.800"/></svg>
<svg class="a" style="left:31px;top:484px;" width="4" height="4" viewBox="0 0 4 4"><path d="M4 0V4H0Z" fill="#d0d0d0"/></svg>
<svg class="a" style="left:11px;top:490px;" width="24" height="24" viewBox="0 0 24 24"><text x="12" y="20" text-anchor="middle" font-family="Liberation Serif,serif" font-size="22" fill="#d4d4d4">T</text></svg>
<svg class="a" style="left:31px;top:510px;" width="4" height="4" viewBox="0 0 4 4"><path d="M4 0V4H0Z" fill="#d0d0d0"/></svg>
<svg class="a" style="left:11px;top:517px;" width="24" height="24" viewBox="0 0 24 24"><path d="M7.500 3V19L11.300 15.300L13.800 21L16.300 19.800L13.800 14.300H19Z" fill="#161616" stroke="#e6e6e6" stroke-width="1.300"/></svg>
<svg class="a" style="left:31px;top:537px;" width="4" height="4" viewBox="0 0 4 4"><path d="M4 0V4H0Z" fill="#d0d0d0"/></svg>
<svg class="a" style="left:11px;top:543px;" width="24" height="24" viewBox="0 0 24 24"><defs><linearGradient id="tr" x1="0" y1="0" x2="0" y2="1"><stop offset="0" stop-color="#a8a8a8"/><stop offset="1" stop-color="#787878"/></linearGradient></defs><rect x="4.500" y="6" width="15" height="12" fill="url(#tr)" stroke="#dedede" stroke-width="1.200"/></svg>
<svg class="a" style="left:31px;top:563px;" width="4" height="4" viewBox="0 0 4 4"><path d="M4 0V4H0Z" fill="#d0d0d0"/></svg>
<svg class="a" style="left:11px;top:572px;" width="24" height="24" viewBox="0 0 24 24"><path d="M8.500 20C6.500 18 4 14.500 3 12C2.500 10.500 4.300 10 5.200 11.500L7.500 14.500L6 6.500C5.700 5 7.600 4.500 8 6L9.500 11L9.500 4.500C9.500 3 11.600 3 11.700 4.500L12 11L13.500 5.500C13.900 4 15.800 4.500 15.500 6L14.500 12L16.800 8.800C17.700 7.600 19.300 8.600 18.500 10L16.500 15C16 17.500 15.500 19 14.500 20Z" fill="#d4d4d4"/></svg>
<svg class="a" style="left:31px;top:592px;" width="4" height="4" viewBox="0 0 4 4"><path d="M4 0V4H0Z" fill="#d0d0d0"/></svg>
<svg class="a" style="left:11px;top:597px;" width="24" height="24" viewBox="0 0 24 24"><circle cx="10.500" cy="9.500" r="4.800" fill="#8e8e8e" stroke="#d4d4d4" stroke-width="1.700"/><path d="M14.200 13.500L19.500 19" stroke="#d4d4d4" stroke-width="2.800" stroke-linecap="round"/></svg>
<div class="a" style="left:11px;top:629px;width:7px;height:7px;background:#dcdcdc;border:1px solid #8a8a8a"></div>
<div class="a" style="left:8px;top:626px;width:7px;height:7px;background:#1a1a1a;border:1px solid #d8d8d8"></div>
<svg class="a" style="left:26px;top:626px;" width="11" height="11" viewBox="0 0 11 11"><path d="M3 1.500C7 1.500 8.500 3 8.500 7" fill="none" stroke="#d8d8d8" stroke-width="1.400"/><path d="M0 1.500L3.500 -1V4ZM8.500 10.500L6 7H11Z" fill="#d8d8d8"/></svg>
<div class="a" style="left:19px;top:652px;width:19px;height:19px;background:#fff;border:1px solid #2a2a2a"></div>
<div class="a" style="left:9px;top:642px;width:18px;height:18px;background:#000;border:1px solid #f4f4f4;box-shadow:0 0 0 1px rgba(28,28,28,.7)"></div>
<div class="a" style="left:14px;top:679px;width:18px;height:13px;border:1px solid #d8d8d8;background:#363636"></div>
<svg class="a" style="left:18px;top:680.5px;" width="10" height="10" viewBox="0 0 10 10"><circle cx="5" cy="5" r="3.600" fill="none" stroke="#efefef" stroke-width="1.200" stroke-dasharray="1.100 1"/></svg>
<div class="a" style="left:19px;top:705px;width:13px;height:10px;border:1px solid #e0e0e0;background:linear-gradient(#9a9a9a,#6c6c6c)"></div>
<div class="a" style="left:14px;top:709px;width:13px;height:10px;border:1px solid #d0d0d0;background:#666"></div>
<svg class="a" style="left:31px;top:719px;" width="4" height="4" viewBox="0 0 4 4"><path d="M4 0V4H0Z" fill="#d0d0d0"/></svg>
<!-- p_right -->
<div class="a" style="left:1443px;top:67px;width:281px;height:865px;background:#3a3a3a"></div>
<div class="a" style="left:1443px;top:67px;width:281px;height:12px;background:#383838;border-top:1px solid #474747;border-bottom:1px solid #2a2a2a"></div>
<svg class="a" style="left:1469px;top:70px;" width="7" height="6" viewBox="0 0 7 6"><path d="M3.500 0L0 3L3.500 6ZM7 0L3.500 3L7 6Z" fill="#c8c8c8"/></svg>
<svg class="a" style="left:1712px;top:70px;" width="7" height="6" viewBox="0 0 7 6"><path d="M0 0L3.500 3L0 6ZM3.500 0L7 3L3.500 6Z" fill="#c8c8c8"/></svg>
<div class="a" style="left:1443px;top:79px;width:38px;height:853px;background:#535353"></div>
<div class="a" style="left:1481px;top:79px;width:2px;height:853px;background:#2e2e2e"></div>
<div class="a" style="left:1452px;top:82px;width:20px;height:4px;background:repeating-linear-gradient(90deg,#303030 0 1px,#5c5c5c 1px 2px)"></div>
<div class="a" style="left:1447px;top:90px;width:29px;height:24px;background:#3a3a3a;border:1px solid #2f2f2f;border-radius:3px"></div>
<svg class="a" style="left:1455px;top:94px;" width="16" height="17" viewBox="0 0 16 17"><rect x=".5" y=".5" width="4" height="4" fill="none" stroke="#d8d8d8"/><rect x=".5" y="6.500" width="4" height="4" fill="none" stroke="#d8d8d8"/><rect x="0" y="12" width="5" height="5" fill="#d8d8d8"/><path d="M10 2C15 3 15.500 10 9.500 13.500" fill="none" stroke="#d8d8d8" stroke-width="2"/><path d="M7.500 3.500L12 0V5.500Z" fill="#d8d8d8"/></svg>
<div class="a" style="left:1443px;top:119px;width:38px;height:1px;background:#2e2e2e"></div>
<div class="a" style="left:1443px;top:120px;width:38px;height:1px;background:#656565"></div>
<div class="a" style="left:1452px;top:123px;width:20px;height:4px;background:repeating-linear-gradient(90deg,#303030 0 1px,#5c5c5c 1px 2px)"></div>
<svg class="a" style="left:1454px;top:134px;" width="17" height="18" viewBox="0 0 17 18"><path d="M5.500 1L10.500 3V9L5.500 11.500L.5 9V3Z" fill="#cfcfcf" stroke="#e8e8e8" stroke-width=".8"/><path d="M.5 3L5.500 5.500L10.500 3M5.500 5.500V11.500" stroke="#666" stroke-width=".9" fill="none"/><rect x="12.500" y="1.500" width="4" height="3.500" fill="#e0e0e0"/><rect x="12.500" y="7" width="4" height="3.500" fill="#e0e0e0"/><rect x="1" y="14" width="15.500" height="3.500" fill="#e0e0e0"/><path d="M12.500 15L16 15L14.200 17Z" fill="#333"/></svg>
<div class="a" style="left:1443px;top:160px;width:38px;height:1px;background:#2e2e2e"></div>
<div class="a" style="left:1443px;top:161px;width:38px;height:1px;background:#656565"></div>
<div class="a" style="left:1483px;top:79px;width:241px;height:17px;background:#383838;border-top:1px solid #474747;border-bottom:1px solid #2a2a2a"></div>
<div class="a" style="left:1483px;top:79px;width:38px;height:18px;background:#535353;border-right:1px solid #2c2c2c;border-top:1px solid #6a6a6a"></div>
<div class="a t m" style="left:1490px;top:80px;"><i>颜</i><i>色</i></div>
<div class="a" style="left:1521px;top:79px;width:38px;height:17px;background:#3f3f3f;border-right:1px solid #2c2c2c;border-top:1px solid #4c4c4c;border-bottom:1px solid #2a2a2a"></div>
<div class="a t" style="left:1528px;top:80px;color:#a0a0a0"><i>色</i><i>板</i></div>
<svg class="a" style="left:1706px;top:84px;" width="15" height="8" viewBox="0 0 15 8"><path d="M0 .5H5L2.500 3.500Z" fill="#cfcfcf"/><path d="M6.500 .5H14.500M6.500 2.500H14.500M6.500 4.500H14.500M6.500 6.500H14.500" stroke="#cfcfcf" stroke-width="1"/></svg>
<div class="a" style="left:1483px;top:96px;width:241px;height:1px;background:#666"></div>
<div class="a" style="left:1483px;top:96px;width:37px;height:1px;background:#535353"></div>
<div class="a" style="left:1483px;top:96px;width:241px;height:112px;background:#535353"></div>
<div class="a" style="left:1499px;top:117px;width:19px;height:19px;background:#fff;border:1px solid #2a2a2a"></div>
<div class="a" style="left:1488px;top:107px;width:20px;height:20px;background:#000;border:1px solid #f4f4f4;box-shadow:0 0 0 1px #333"></div>
<div class="a t m" style="left:1526px;top:108px;font-size:11.5px">R</div>
<div class="a" style="left:1542px;top:109px;width:112px;height:6px;background:linear-gradient(90deg,#000,#ff0000);border:1px solid #2a2a2a;border-bottom-color:#777"></div>
<svg class="a" style="left:1537px;top:116px;" width="11" height="9" viewBox="0 0 11 9"><path d="M5.500 0L10.500 6.500V8.500H.5V6.500Z" fill="#b8b8b8" stroke="#3a3a3a" stroke-width=".8"/></svg>
<div class="a" style="left:1660px;top:107px;width:39px;height:20px;background:#3c3c3c;border:1px solid #343434;border-bottom-color:#666"></div>
<div class="a t w" style="left:1663px;top:109px;">0</div>
<div class="a t m" style="left:1526px;top:133px;font-size:11.5px">G</div>
<div class="a" style="left:1542px;top:134px;width:112px;height:6px;background:linear-gradient(90deg,#000,#00ff00);border:1px solid #2a2a2a;border-bottom-color:#777"></div>
<svg class="a" style="left:1537px;top:141px;" width="11" height="9" viewBox="0 0 11 9"><path d="M5.500 0L10.500 6.500V8.500H.5V6.500Z" fill="#b8b8b8" stroke="#3a3a3a" stroke-width=".8"/></svg>
<div class="a" style="left:1660px;top:132px;width:39px;height:20px;background:#3c3c3c;border:1px solid #343434;border-bottom-color:#666"></div>
<div class="a t w" style="left:1663px;top:134px;">0</div>
<div class="a t m" style="left:1526px;top:158px;font-size:11.5px">B</div>
<div class="a" style="left:1542px;top:159px;width:112px;height:6px;background:linear-gradient(90deg,#000,#0000ff);border:1px solid #2a2a2a;border-bottom-color:#777"></div>
<svg class="a" style="left:1537px;top:166px;" width="11" height="9" viewBox="0 0 11 9"><path d="M5.500 0L10.500 6.500V8.500H.5V6.500Z" fill="#b8b8b8" stroke="#3a3a3a" stroke-width=".8"/></svg>
<div class="a" style="left:1660px;top:157px;width:39px;height:20px;background:#3c3c3c;border:1px solid #343434;border-bottom-color:#666"></div>
<div class="a t w" style="left:1663px;top:159px;">0</div>
<div class="a" style="left:1488px;top:187px;width:218px;height:15px;background:linear-gradient(90deg,#f01010 0%,#fff200 17%,#00a650 36%,#00aeef 50%,#1b1f8a 67%,#ec008c 84%,#f01010 100%)"></div>
<div class="a" style="left:1488px;top:187px;width:218px;height:15px;background:linear-gradient(180deg,rgba(255,255,255,.95) 0%,rgba(255,255,255,0) 48%,rgba(0,0,0,0) 52%,rgba(0,0,0,.95) 100%)"></div>
<div class="a" style="left:1697px;top:187px;width:9px;height:7px;background:#fff"></div>
<div class="a" style="left:1697px;top:194px;width:9px;height:8px;background:#000"></div>
<div class="a" style="left:1483px;top:208px;width:241px;height:3px;background:#2e2e2e"></div>
<div class="a" style="left:1483px;top:211px;width:241px;height:17px;background:#383838;border-top:1px solid #474747;border-bottom:1px solid #2a2a2a"></div>
<div class="a" style="left:1483px;top:211px;width:39px;height:18px;background:#535353;border-right:1px solid #2c2c2c;border-top:1px solid #6a6a6a"></div>
<div class="a t m" style="left:1490px;top:212px;"><i>调</i><i>整</i></div>
<div class="a" style="left:1522px;top:211px;width:39px;height:17px;background:#3f3f3f;border-right:1px solid #2c2c2c;border-top:1px solid #4c4c4c;border-bottom:1px solid #2a2a2a"></div>
<div class="a t" style="left:1529px;top:212px;color:#a0a0a0"><i>样</i><i>式</i></div>
<svg class="a" style="left:1706px;top:216px;" width="15" height="8" viewBox="0 0 15 8"><path d="M0 .5H5L2.500 3.500Z" fill="#cfcfcf"/><path d="M6.500 .5H14.500M6.500 2.500H14.500M6.500 4.500H14.500M6.500 6.500H14.500" stroke="#cfcfcf" stroke-width="1"/></svg>
<div class="a" style="left:1483px;top:228px;width:241px;height:1px;background:#666"></div>
<div class="a" style="left:1483px;top:228px;width:38px;height:1px;background:#535353"></div>
<div class="a" style="left:1483px;top:228px;width:241px;height:112px;background:#535353"></div>
<div class="a t m" style="left:1492px;top:233px;"><i>添</i><i>加</i><i>调</i><i>整</i></div>
<svg class="a" style="left:1531px;top:259px;" width="16" height="14" viewBox="0 0 16 14"><circle cx="8" cy="7" r="3.300" fill="none" stroke="#d8d8d8" stroke-width="1.400"/><path d="M8 3.700A3.300 3.300 0 0 1 8 10.300Z" fill="#d8d8d8"/><path d="M8 0V2M8 12V14M1 7H3M13 7H15M3 2L4.400 3.400M11.600 10.600L13 12M13 2L11.600 3.400M3 12L4.400 10.600" stroke="#d8d8d8" stroke-width="1.400"/></svg>
<svg class="a" style="left:1555px;top:259px;" width="16" height="14" viewBox="0 0 16 14"><path d="M0 13V9L1.500 9V6L3 9L4 4L5.500 9L6.500 2L8 8L9.500 1L10.500 8L12 4L13 9L14.500 5L16 9V13Z" fill="#d8d8d8"/></svg>
<svg class="a" style="left:1580px;top:259px;" width="16" height="14" viewBox="0 0 16 14"><rect x=".5" y=".5" width="15" height="13" fill="none" stroke="#d8d8d8"/><path d="M.5 5H15.500M.5 9.500H15.500M5.500 .5V13.500M10.500 .5V13.500" stroke="#9a9a9a" stroke-width=".8"/><path d="M1 13C7 13 8 2 15 1" fill="none" stroke="#f2f2f2" stroke-width="1.500"/></svg>
<svg class="a" style="left:1604px;top:259px;" width="16" height="14" viewBox="0 0 16 14"><rect x=".5" y=".5" width="15" height="13" fill="#535353" stroke="#d8d8d8"/><path d="M.5 13.500L15.500 .5V13.500Z" fill="#d8d8d8"/><path d="M2.500 4H6.500M4.500 2V6" stroke="#eee" stroke-width="1.200"/><path d="M9.500 10H13.500" stroke="#333" stroke-width="1.200"/></svg>
<svg class="a" style="left:1628px;top:259px;" width="16" height="14" viewBox="0 0 16 14"><defs><linearGradient id="vg" x1="0" y1="0" x2="0" y2="1"><stop offset="0" stop-color="#e8e8e8"/><stop offset="1" stop-color="#707070"/></linearGradient></defs><path d="M.5 .5H15.500L8 14Z" fill="url(#vg)"/></svg>
<svg class="a" style="left:1520px;top:287px;" width="16" height="14" viewBox="0 0 16 14"><rect x=".5" y=".5" width="15" height="12" fill="#d0d0d0" stroke="#d8d8d8"/><path d="M1 1H6V6H1ZM11 1H15V6H11Z" fill="#777"/><rect x="1" y="7.500" width="14" height="4.500" fill="#9a9a9a"/></svg>
<svg class="a" style="left:1543px;top:287px;" width="16" height="14" viewBox="0 0 16 14"><path d="M8 1V12M2 4.500H14M5 13H11" stroke="#d8d8d8" stroke-width="1.400"/><path d="M0 10.500L2.500 4.500L5 10.500ZM11 10.500L13.500 4.500L16 10.500Z" fill="none" stroke="#d8d8d8" stroke-width="1.100"/><path d="M0 10.500H5A2.500 2.500 0 0 1 0 10.500ZM11 10.500H16A2.500 2.500 0 0 1 11 10.500Z" fill="#d8d8d8"/><rect x="6.500" y="0" width="3" height="3" fill="#d8d8d8"/></svg>
<svg class="a" style="left:1568px;top:287px;" width="16" height="14" viewBox="0 0 16 14"><rect x=".5" y=".5" width="15" height="12" fill="#e0e0e0" stroke="#d8d8d8"/><rect x="1" y="1" width="6.500" height="11" fill="#3a3a3a"/></svg>
<svg class="a" style="left:1591px;top:287px;" width="16" height="14" viewBox="0 0 16 14"><rect x=".5" y="2" width="11" height="8" rx="1" fill="#cfcfcf"/><rect x="3" y=".5" width="4" height="2" fill="#cfcfcf"/><circle cx="6" cy="6" r="2.300" fill="#535353"/><circle cx="11.500" cy="10" r="4" fill="#9a9a9a" stroke="#e6e6e6" stroke-width="1.100"/></svg>
<svg class="a" style="left:1615px;top:287px;" width="16" height="14" viewBox="0 0 16 14"><circle cx="8" cy="4.500" r="4" fill="#d8d8d8"/><circle cx="4.500" cy="10" r="4" fill="#bdbdbd"/><circle cx="11.500" cy="10" r="4" fill="#e6e6e6"/><circle cx="8" cy="8.500" r="1.600" fill="#535353"/></svg>
<svg class="a" style="left:1640px;top:287px;" width="16" height="14" viewBox="0 0 16 14"><rect x=".5" y=".5" width="15" height="12" fill="#8a8a8a" stroke="#d8d8d8"/><path d="M.5 4.500H15.500M.5 8.500H15.500M5.500 .5V12.500M10.500 .5V12.500" stroke="#e2e2e2" stroke-width="1.200"/></svg>
<svg class="a" style="left:1532px;top:314px;" width="16" height="14" viewBox="0 0 16 14"><rect x=".5" y=".5" width="15" height="12" fill="#d8d8d8" stroke="#d8d8d8"/><ellipse cx="8" cy="6.500" rx="5" ry="3.500" fill="#444" transform="rotate(-25 8 6.500)"/><path d="M3.500 9.500L12.500 3.500" stroke="#d8d8d8" stroke-width="1"/></svg>
<svg class="a" style="left:1556px;top:314px;" width="16" height="14" viewBox="0 0 16 14"><rect x=".5" y=".5" width="15" height="12" fill="#8c8c8c" stroke="#d8d8d8"/><path d="M1 9L9 1H15L3 12.500H1Z" fill="#c8c8c8"/><path d="M8 12.500L15 6V12.500Z" fill="#6c6c6c"/></svg>
<svg class="a" style="left:1580px;top:314px;" width="16" height="14" viewBox="0 0 16 14"><rect x=".5" y=".5" width="15" height="12" fill="#e2e2e2" stroke="#d8d8d8"/><path d="M1 9H5V6.500H9V4H13V1.500H15V5H12V7.500H8V10H4V12H1Z" fill="#333"/></svg>
<svg class="a" style="left:1604px;top:314px;" width="16" height="14" viewBox="0 0 16 14"><rect x=".5" y=".5" width="15" height="12" fill="#d0d0d0" stroke="#d8d8d8"/><path d="M1 1L8 6.500L1 12ZM15 1L8 6.500L15 12Z" fill="#6a6a6a"/></svg>
<svg class="a" style="left:1628px;top:314px;" width="16" height="14" viewBox="0 0 16 14"><defs><linearGradient id="gm" x1="0" x2="1"><stop offset="0" stop-color="#555"/><stop offset="1" stop-color="#dcdcdc"/></linearGradient></defs><rect x=".5" y=".5" width="15" height="12" fill="url(#gm)" stroke="#d8d8d8"/></svg>
<div class="a" style="left:1483px;top:340px;width:241px;height:3px;background:#2e2e2e"></div>
<div class="a" style="left:1483px;top:343px;width:241px;height:17px;background:#383838;border-top:1px solid #474747;border-bottom:1px solid #2a2a2a"></div>
<div class="a" style="left:1483px;top:343px;width:39px;height:18px;background:#535353;border-right:1px solid #2c2c2c;border-top:1px solid #6a6a6a"></div>
<div class="a t m" style="left:1490px;top:344px;"><i>图</i><i>层</i></div>
<div class="a" style="left:1522px;top:343px;width:39px;height:17px;background:#3f3f3f;border-right:1px solid #2c2c2c;border-top:1px solid #4c4c4c;border-bottom:1px solid #2a2a2a"></div>
<div class="a t" style="left:1529px;top:344px;color:#a0a0a0"><i>通</i><i>道</i></div>
<div class="a" style="left:1561px;top:343px;width:40px;height:17px;background:#3f3f3f;border-right:1px solid #2c2c2c;border-top:1px solid #4c4c4c;border-bottom:1px solid #2a2a2a"></div>
<div class="a t" style="left:1568px;top:344px;color:#a0a0a0"><i>路</i><i>径</i></div>
<svg class="a" style="left:1706px;top:348px;" width="15" height="8" viewBox="0 0 15 8"><path d="M0 .5H5L2.500 3.500Z" fill="#cfcfcf"/><path d="M6.500 .5H14.500M6.500 2.500H14.500M6.500 4.500H14.500M6.500 6.500H14.500" stroke="#cfcfcf" stroke-width="1"/></svg>
<div class="a" style="left:1483px;top:360px;width:241px;height:1px;background:#666"></div>
<div class="a" style="left:1483px;top:360px;width:38px;height:1px;background:#535353"></div>
<div class="a" style="left:1483px;top:360px;width:241px;height:86px;background:#535353"></div>
<div class="a" style="left:1487px;top:364px;width:71px;height:20px;background:linear-gradient(#6e6e6e,#5c5c5c);border:1px solid #2f2f2f;border-radius:3px;box-shadow:inset 0 1px 0 #868686"></div>
<svg class="a" style="left:1494px;top:368px;" width="11" height="12" viewBox="0 0 11 12"><circle cx="6.500" cy="4.500" r="3.400" fill="none" stroke="#e2e2e2" stroke-width="1.500"/><path d="M4 7L1 11" stroke="#e2e2e2" stroke-width="2"/></svg>
<div class="a t w" style="left:1509px;top:366px;"><i>类</i><i>型</i></div>
<svg class="a" style="left:1547px;top:369px;" width="6" height="9" viewBox="0 0 6 9"><path d="M0 3.500L3 0L6 3.500ZM0 5.500L3 9L6 5.500Z" fill="#f0f0f0"/></svg>
<svg class="a" style="left:1579px;top:367px;" width="14" height="12" viewBox="0 0 14 12"><rect x=".5" y=".5" width="13" height="11" fill="#535353" stroke="#d8d8d8"/><path d="M2 10L5.500 5.500L8 8L10 6.500L12 10Z" fill="#d8d8d8"/><circle cx="10" cy="3.500" r="1.200" fill="#d8d8d8"/></svg>
<svg class="a" style="left:1603px;top:367px;" width="12" height="12" viewBox="0 0 12 12"><circle cx="6" cy="6" r="5" fill="none" stroke="#d8d8d8" stroke-width="1.300"/><path d="M2.500 9.500L9.500 2.500A5 5 0 0 0 2.500 9.500Z" fill="#d8d8d8"/></svg>
<svg class="a" style="left:1627px;top:366px;" width="13" height="14" viewBox="0 0 13 14"><text x="6.500" y="12.500" text-anchor="middle" font-family="Liberation Serif,serif" font-size="16" fill="#d8d8d8">T</text></svg>
<svg class="a" style="left:1651px;top:367px;" width="13" height="13" viewBox="0 0 13 13"><rect x="2" y="2" width="9" height="9" fill="none" stroke="#d8d8d8" stroke-width="1.200"/><path d="M0 0H3.500V3.500H0ZM9.500 0H13V3.500H9.500ZM0 9.500H3.500V13H0ZM9.500 9.500H13V13H9.500Z" fill="#d8d8d8"/></svg>
<svg class="a" style="left:1675px;top:367px;" width="12" height="13" viewBox="0 0 12 13"><path d="M3.500 .5H8.500L11.500 3.500V9.500H3.500Z" fill="#535353" stroke="#d8d8d8"/><rect x="0" y="6.500" width="6.500" height="6.500" fill="#d8d8d8"/></svg>
<div class="a" style="left:1710px;top:366px;width:9px;height:17px;background:#3a3a3a;border:1px solid #2f2f2f;border-radius:1px"></div>
<div class="a" style="left:1711px;top:367px;width:7px;height:7px;background:linear-gradient(#999,#666)"></div>
<div class="a" style="left:1483px;top:387px;width:241px;height:1px;background:#3a3a3a"></div>
<div class="a" style="left:1483px;top:388px;width:241px;height:1px;background:#646464"></div>
<div class="a" style="left:1487px;top:392px;width:111px;height:20px;background:linear-gradient(#6e6e6e,#5c5c5c);border:1px solid #2f2f2f;border-radius:3px;box-shadow:inset 0 1px 0 #868686"></div>
<div class="a t w" style="left:1496px;top:394px;"><i>正</i><i>常</i></div>
<svg class="a" style="left:1587px;top:397px;" width="6" height="9" viewBox="0 0 6 9"><path d="M0 3.500L3 0L6 3.500ZM0 5.500L3 9L6 5.500Z" fill="#f0f0f0"/></svg>
<div class="a t m" style="left:1606px;top:394px;"><i>不</i><i>透</i><i>明</i><i>度</i>:</div>
<div class="a t m" style="left:1630px;top:421px;"><i>填</i><i>充</i>:</div>
<div class="a" style="left:1663px;top:392px;width:36px;height:20px;background:#3c3c3c;border:1px solid #303030;border-radius:2px 0 0 2px"></div>
<div class="a t w" style="left:1667px;top:394px;font-size:11.5px">100%</div>
<div class="a" style="left:1698px;top:392px;width:21px;height:20px;background:linear-gradient(#6a6a6a,#585858);border:1px solid #303030;border-radius:0 2px 2px 0"></div>
<svg class="a" style="left:1705px;top:400px;" width="7" height="4" viewBox="0 0 7 4"><path d="M0 0H7L3.500 4Z" fill="#f0f0f0"/></svg>
<div class="a" style="left:1663px;top:420px;width:36px;height:20px;background:#3c3c3c;border:1px solid #303030;border-radius:2px 0 0 2px"></div>
<div class="a t w" style="left:1667px;top:422px;font-size:11.5px">100%</div>
<div class="a" style="left:1698px;top:420px;width:21px;height:20px;background:linear-gradient(#6a6a6a,#585858);border:1px solid #303030;border-radius:0 2px 2px 0"></div>
<svg class="a" style="left:1705px;top:428px;" width="7" height="4" viewBox="0 0 7 4"><path d="M0 0H7L3.500 4Z" fill="#f0f0f0"/></svg>
<div class="a" style="left:1483px;top:415px;width:241px;height:1px;background:#3a3a3a"></div>
<div class="a" style="left:1483px;top:416px;width:241px;height:1px;background:#646464"></div>
<div class="a t m" style="left:1490px;top:421px;"><i>锁</i><i>定</i>:</div>
<svg class="a" style="left:1527px;top:424px;" width="11" height="11" viewBox="0 0 11 11"><rect width="11" height="11" fill="#d8d8d8"/><path d="M0 0H3.700V3.700H0ZM7.300 0H11V3.700H7.300ZM3.700 3.700H7.300V7.300H3.700ZM0 7.300H3.700V11H0ZM7.300 7.300H11V11H7.300Z" fill="#8a8a8a"/></svg>
<svg class="a" style="left:1547px;top:422px;" width="16" height="14" viewBox="0 0 16 14"><path d="M15 1L7.500 9.500" stroke="#d8d8d8" stroke-width="2" stroke-linecap="round"/><path d="M0 13C3 13.500 7 12.500 8 10L5.500 8C4.500 10.500 2.500 12 0 13Z" fill="#d8d8d8"/></svg>
<svg class="a" style="left:1570px;top:423px;" width="13" height="13" viewBox="0 0 13 13"><path d="M6.500 1V12M1 6.500H12" stroke="#d8d8d8" stroke-width="1.300"/><path d="M6.500 0L4.500 2.500H8.500ZM6.500 13L4.500 10.500H8.500ZM0 6.500L2.500 4.500V8.500ZM13 6.500L10.500 4.500V8.500Z" fill="#d8d8d8"/></svg>
<svg class="a" style="left:1594px;top:422px;" width="10" height="13" viewBox="0 0 10 13"><path d="M2.500 6V3.500A2.500 2.500 0 0 1 7.500 3.500V6" fill="none" stroke="#d8d8d8" stroke-width="1.500"/><rect x=".5" y="6" width="9" height="7" fill="#d8d8d8"/><rect x="4.200" y="8" width="1.600" height="3" fill="#444"/></svg>
<div class="a" style="left:1483px;top:445px;width:241px;height:1px;background:#303030"></div>
<div class="a" style="left:1483px;top:446px;width:226px;height:466px;background:#464646"></div>
<div class="a" style="left:1709px;top:446px;width:14px;height:466px;background:linear-gradient(90deg,#363636,#434343 60%,#3a3a3a)"></div>
<div class="a" style="left:1708px;top:446px;width:1px;height:466px;background:#303030"></div>
<div class="a" style="left:1483px;top:446px;width:225px;height:38px;background:#535353;border-bottom:1px solid #5b5b5b"></div>
<div class="a" style="left:1514px;top:446px;width:194px;height:38px;background:#6e7e97;border-bottom:1px solid #7a8aa4"></div>
<div class="a" style="left:1483px;top:484px;width:225px;height:1px;background:#323232"></div>
<div class="a" style="left:1513px;top:446px;width:1px;height:38px;background:#383838"></div>
<svg class="a" style="left:1491.5px;top:461px;" width="13" height="9" viewBox="0 0 13 9"><path d="M0 4.500C2.800 -.5 10.200 -.5 13 4.500C10.200 9.500 2.800 9.500 0 4.500Z" fill="#d4d4d4"/><circle cx="6.500" cy="4.200" r="2.700" fill="#3a3a3a"/><circle cx="5.800" cy="3.300" r=".9" fill="#d4d4d4"/></svg>
<div class="a" style="left:1515px;top:447px;width:27px;height:36px;border:1px solid #fff"></div>
<div class="a" style="left:1524px;top:447px;width:9px;height:36px;background:#6e7e97"></div>
<div class="a" style="left:1515px;top:459px;width:27px;height:12px;background:#6e7e97"></div>
<svg class="a" style="left:1517px;top:449px" width="23" height="32" viewBox="0 0 418 623" preserveAspectRatio="none"><use href="#photo"/></svg>
<svg class="a" style="left:1517px;top:449px;" width="23" height="32" viewBox="0 0 23 32"><path d="M11.400 21.700L9.300 25M11.400 21.700L13.400 25" stroke="#c21a2a" stroke-width=".6" fill="none" opacity=".7"/></svg>
<div class="a" style="left:1517px;top:449px;width:23px;height:32px;border:1px solid #0a0a0a"></div>
<div class="a t w" style="left:1550px;top:458px;"><i>图</i><i>层</i> 0 <i>副</i><i>本</i></div>
<div class="a" style="left:1483px;top:485px;width:225px;height:39px;background:#535353;border-bottom:1px solid #5b5b5b"></div>
<div class="a" style="left:1483px;top:524px;width:225px;height:1px;background:#323232"></div>
<div class="a" style="left:1513px;top:485px;width:1px;height:39px;background:#383838"></div>
<svg class="a" style="left:1491.5px;top:500px;" width="13" height="9" viewBox="0 0 13 9"><path d="M0 4.500C2.800 -.5 10.200 -.5 13 4.500C10.200 9.500 2.800 9.500 0 4.500Z" fill="#d4d4d4"/><circle cx="6.500" cy="4.200" r="2.700" fill="#3a3a3a"/><circle cx="5.800" cy="3.300" r=".9" fill="#d4d4d4"/></svg>
<svg class="a" style="left:1517px;top:488px" width="23" height="32" viewBox="0 0 418 623" preserveAspectRatio="none"><use href="#photo"/></svg>
<svg class="a" style="left:1517px;top:488px;" width="23" height="32" viewBox="0 0 23 32"><path d="M11.400 21.700L9.300 25M11.400 21.700L13.400 25" stroke="#c21a2a" stroke-width=".6" fill="none" opacity=".7"/></svg>
<div class="a" style="left:1517px;top:488px;width:23px;height:32px;border:1px solid #0a0a0a"></div>
<div class="a t w" style="left:1550px;top:497px;"><i>图</i><i>层</i> 0</div>
<div class="a" style="left:1483px;top:912px;width:241px;height:19px;background:#535353;border-top:1px solid #2e2e2e"></div>
<div class="a" style="left:1483px;top:913px;width:241px;height:1px;background:#686868"></div>
<!-- p_timeline -->
<div class="a" style="left:45px;top:791px;width:1396px;height:17px;background:#3a3a3a"></div>
<div class="a" style="left:45px;top:791px;width:50px;height:18px;background:#535353;border-right:1px solid #2e2e2e;border-top:1px solid #676767"></div>
<div class="a t m" style="left:52px;top:792px;"><i>时</i><i>间</i><i>轴</i></div>
<svg class="a" style="left:1422px;top:797px;" width="15" height="8" viewBox="0 0 15 8"><path d="M0 .5H5L2.500 3.500Z" fill="#cfcfcf"/><path d="M6.500 .5H14.500M6.500 2.500H14.500M6.500 4.500H14.500M6.500 6.500H14.500" stroke="#cfcfcf" stroke-width="1"/></svg>
<div class="a" style="left:45px;top:808px;width:1396px;height:104px;background:#535353"></div>
<div class="a" style="left:45px;top:808px;width:1396px;height:1px;background:#6a6a6a"></div>
<div class="a" style="left:45px;top:845px;width:1396px;height:1px;background:#3a3a3a"></div>
<div class="a" style="left:206px;top:811px;width:1px;height:32px;background:#3a3a3a"></div>
<div class="a" style="left:292px;top:809px;width:1px;height:36px;background:#3a3a3a"></div>
<div class="a" style="left:1396px;top:809px;width:1px;height:36px;background:#3a3a3a"></div>
<svg class="a" style="left:54px;top:821px;" width="12" height="9" viewBox="0 0 12 9"><path d="M0 0L7.500 4.500L0 9Z" fill="#9b9b9b"/><path d="M10 0V9" stroke="#9b9b9b" stroke-width="2"/></svg>
<svg class="a" style="left:85px;top:821px;" width="12" height="9" viewBox="0 0 12 9"><path d="M8 0L.5 4.500L8 9Z" fill="#9b9b9b"/><path d="M10.500 0V9" stroke="#9b9b9b" stroke-width="2"/></svg>
<svg class="a" style="left:119px;top:821px;" width="9" height="10" viewBox="0 0 9 10"><path d="M0 0L9 5L0 10Z" fill="#9b9b9b"/></svg>
<svg class="a" style="left:149px;top:821px;" width="12" height="9" viewBox="0 0 12 9"><path d="M4 0L11.500 4.500L4 9Z" fill="#9b9b9b"/><path d="M1.500 0V9" stroke="#9b9b9b" stroke-width="2"/></svg>
<svg class="a" style="left:181px;top:821px;" width="7" height="10" viewBox="0 0 7 10"><path d="M0 3.500H2.500L6.500 0V10L2.500 6.500H0Z" fill="#9b9b9b"/></svg>
<svg class="a" style="left:216px;top:818px;" width="17" height="14" viewBox="0 0 17 14"><circle cx="2.700" cy="3" r="2" fill="none" stroke="#9b9b9b" stroke-width="1.300"/><circle cx="2.700" cy="11" r="2" fill="none" stroke="#9b9b9b" stroke-width="1.300"/><path d="M4.500 4L16.500 10.500M4.500 10L16.500 3.500" stroke="#9b9b9b" stroke-width="1.500"/></svg>
<svg class="a" style="left:251px;top:820px;" width="12" height="12" viewBox="0 0 12 12"><rect x=".5" y=".5" width="11" height="11" fill="none" stroke="#9b9b9b"/><path d="M1 11L11 1V11Z" fill="#9b9b9b"/></svg>
<div class="a" style="left:675px;top:869px;width:114px;height:19px;background:linear-gradient(#6c6c6c,#5a5a5a);border:1px solid #2f2f2f;border-radius:2px;box-shadow:inset 0 1px 0 #868686"></div>
<div class="a t w" style="left:689px;top:870px;"><i>创</i><i>建</i><i>视</i><i>频</i><i>时</i><i>间</i><i>轴</i></div>
<div class="a" style="left:791px;top:869px;width:19px;height:19px;background:linear-gradient(#6c6c6c,#5a5a5a);border:1px solid #2f2f2f;border-radius:2px;box-shadow:inset 0 1px 0 #868686"></div>
<svg class="a" style="left:796px;top:876px;" width="9" height="5" viewBox="0 0 9 5"><path d="M0 0H9L4.500 5Z" fill="#f0f0f0"/></svg>
<div class="a" style="left:45px;top:912px;width:1379px;height:19px;background:linear-gradient(#353535,#434343)"></div>
<div class="a" style="left:45px;top:912px;width:1396px;height:1px;background:#303030"></div>
<div class="a" style="left:45px;top:912px;width:247px;height:19px;background:#535353;border-top:1px solid #3a3a3a"></div>
<div class="a" style="left:292px;top:912px;width:1px;height:19px;background:#333"></div>
<div class="a" style="left:293px;top:912px;width:158px;height:19px;background:#535353;border-top:1px solid #3a3a3a"></div>
<div class="a" style="left:1424px;top:912px;width:17px;height:19px;background:#535353"></div>
<div class="a" style="left:51px;top:920px;width:5px;height:5px;border:1px solid #9b9b9b"></div>
<div class="a" style="left:57px;top:920px;width:5px;height:5px;border:1px solid #9b9b9b"></div>
<div class="a" style="left:63px;top:920px;width:5px;height:5px;border:1px solid #9b9b9b"></div>
<svg class="a" style="left:81px;top:916px;" width="14" height="12" viewBox="0 0 14 12"><path d="M0 11C1 6 4 4 8 4V.5L13.500 6L8 11.500V8C5 8 2 8.500 0 11Z" fill="#9b9b9b"/></svg>
<svg class="a" style="left:301px;top:919px;" width="10" height="5" viewBox="0 0 10 5"><path d="M0 5L3 1.500L5 3.500L7 0L10 5Z" fill="#9b9b9b"/></svg>
<div class="a" style="left:328px;top:919px;width:88px;height:5px;background:#3a3a3a;border-radius:3px;border:1px solid #2c2c2c;border-bottom-color:#686868"></div>
<svg class="a" style="left:427px;top:916px;" width="16" height="8" viewBox="0 0 16 8"><path d="M0 8L4.500 2.500L7.500 5.500L11 0L16 8Z" fill="none" stroke="#9b9b9b" stroke-width="1.200"/></svg>
<svg class="a" style="left:1520px;top:918px;" width="14" height="9" viewBox="0 0 14 9"><rect x=".8" y="1.300" width="7.500" height="6.400" rx="3.200" fill="none" stroke="#cfcfcf" stroke-width="1.500"/><rect x="5.700" y="1.300" width="7.500" height="6.400" rx="3.200" fill="none" stroke="#cfcfcf" stroke-width="1.500"/></svg>
<div class="a t" style="left:1548px;top:913px;font-family:'Liberation Serif',serif;font-style:italic;font-size:15px;color:#d8d8d8">fx</div>
<svg class="a" style="left:1562px;top:927px;" width="4" height="3" viewBox="0 0 4 3"><path d="M0 0H4L2 3Z" fill="#cfcfcf"/></svg>
<svg class="a" style="left:1575px;top:916px;" width="13" height="12" viewBox="0 0 13 12"><rect width="13" height="12" fill="#cfcfcf"/><circle cx="6.500" cy="6" r="2.800" fill="#4a4a4a"/></svg>
<svg class="a" style="left:1602px;top:916px;" width="12" height="12" viewBox="0 0 12 12"><circle cx="6" cy="6" r="5" fill="none" stroke="#cfcfcf" stroke-width="1.400"/><path d="M2.500 9.500L9.500 2.500A5 5 0 0 0 2.500 9.500Z" fill="#cfcfcf"/></svg>
<svg class="a" style="left:1614px;top:927px;" width="4" height="3" viewBox="0 0 4 3"><path d="M0 0H4L2 3Z" fill="#cfcfcf"/></svg>
<svg class="a" style="left:1628px;top:916px;" width="13" height="11" viewBox="0 0 13 11"><path d="M0 1.500H5L6.500 3H13V11H0Z" fill="#cfcfcf"/></svg>
<svg class="a" style="left:1656px;top:916px;" width="11" height="12" viewBox="0 0 11 12"><path d="M.5 .5H10.500V11.500H4L.5 8Z" fill="#cfcfcf"/><path d="M.5 8H4V11.500" fill="#535353" stroke="#535353"/></svg>
<svg class="a" style="left:1684px;top:915px;" width="10" height="13" viewBox="0 0 10 13"><path d="M0 2.500H10M3 2V.6H7V2" stroke="#cfcfcf" stroke-width="1.300" fill="none"/><path d="M1 4H9L8.300 13H1.700Z" fill="#cfcfcf"/><path d="M3.400 5.500V11.500M5 5.500V11.500M6.600 5.500V11.500" stroke="#535353" stroke-width=".9"/></svg>
<!-- p_edges -->
<div class="a" style="left:0px;top:931px;width:1728px;height:5px;background:#575757"></div>
<div class="a" style="left:4px;top:931px;width:1720px;height:1px;background:#2a2a2a"></div>
<div class="a" style="left:1723px;top:33px;width:1px;height:899px;background:#2c2c2c"></div>
<div class="a" style="left:1724px;top:0px;width:4px;height:936px;background:#575757"></div>
<div class="a" style="left:0px;top:0px;width:1728px;height:1px;background:#1c1c1c"></div>
<div class="a" style="left:1px;top:1px;width:1617px;height:1px;background:#5e5e5e"></div>
<div class="a" style="left:0px;top:0px;width:1px;height:936px;background:#1e1e1e"></div>
<div class="a" style="left:1727px;top:0px;width:1px;height:936px;background:#161616"></div>
<div class="a" style="left:0px;top:935px;width:1728px;height:1px;background:#111"></div>
<svg class="a" style="left:0px;top:0px;" width="5" height="5" viewBox="0 0 5 5"><path d="M0 0H5A5 5 0 0 0 0 5Z" fill="#0c0c0c"/></svg>
<svg class="a" style="left:1723px;top:0px;" width="5" height="5" viewBox="0 0 5 5"><path d="M5 0H0A5 5 0 0 1 5 5Z" fill="#0c0c0c"/></svg>
<!-- p_menu -->
<div class="a" style="left:155px;top:26px;width:248px;height:447px;background:#f0f0f0;border:1px solid #979797;box-shadow:3px 3px 3px rgba(0,0,0,.4)"></div>
<div class="a t k" style="left:177px;top:32px;"><i>模</i><i>式</i>(M)</div>
<svg class="a" style="left:388px;top:36px;" width="4" height="7" viewBox="0 0 4 7"><path d="M0 0L4 3.500L0 7Z" fill="#000"/></svg>
<div class="a" style="left:158px;top:53px;width:242px;height:1px;background:#a0a0a0"></div>
<div class="a" style="left:158px;top:54px;width:242px;height:1px;background:#fff"></div>
<div class="a" style="left:158px;top:59px;width:242px;height:21px;background:#0078d7"></div>
<div class="a t w" style="left:177px;top:62px;"><i>调</i><i>整</i>(J)</div>
<svg class="a" style="left:388px;top:66px;" width="4" height="7" viewBox="0 0 4 7"><path d="M0 0L4 3.500L0 7Z" fill="#fff"/></svg>
<div class="a" style="left:158px;top:83px;width:242px;height:1px;background:#a0a0a0"></div>
<div class="a" style="left:158px;top:84px;width:242px;height:1px;background:#fff"></div>
<div class="a t k" style="left:177px;top:92px;"><i>自</i><i>动</i><i>色</i><i>调</i>(N)</div>
<div class="a t k" style="right:1342.5px;top:92px;letter-spacing:.5px">Shift+Ctrl+L</div>
<div class="a t k" style="left:177px;top:113px;"><i>自</i><i>动</i><i>对</i><i>比</i><i>度</i>(U)</div>
<div class="a t k" style="right:1342.5px;top:113px;letter-spacing:.5px">Alt+Shift+Ctrl+L</div>
<div class="a t k" style="left:177px;top:134px;"><i>自</i><i>动</i><i>颜</i><i>色</i>(O)</div>
<div class="a t k" style="right:1342.5px;top:134px;letter-spacing:.5px">Shift+Ctrl+B</div>
<div class="a" style="left:158px;top:155px;width:242px;height:1px;background:#a0a0a0"></div>
<div class="a" style="left:158px;top:156px;width:242px;height:1px;background:#fff"></div>
<div class="a t k" style="left:177px;top:164px;"><i>图</i><i>像</i><i>大</i><i>小</i>(I)...</div>
<div class="a t k" style="right:1342.5px;top:164px;letter-spacing:.5px">Alt+Ctrl+I</div>
<div class="a t k" style="left:177px;top:185px;"><i>画</i><i>布</i><i>大</i><i>小</i>(S)...</div>
<div class="a t k" style="right:1342.5px;top:185px;letter-spacing:.5px">Alt+Ctrl+C</div>
<div class="a t k" style="left:177px;top:206px;"><i>图</i><i>像</i><i>旋</i><i>转</i>(G)</div>
<svg class="a" style="left:388px;top:210px;" width="4" height="7" viewBox="0 0 4 7"><path d="M0 0L4 3.500L0 7Z" fill="#000"/></svg>
<div class="a t d" style="left:177px;top:227px;"><i>裁</i><i>剪</i>(P)</div>
<div class="a t k" style="left:177px;top:248px;"><i>裁</i><i>切</i>(R)...</div>
<div class="a t k" style="left:177px;top:269px;"><i>显</i><i>示</i><i>全</i><i>部</i>(V)</div>
<div class="a" style="left:158px;top:290px;width:242px;height:1px;background:#a0a0a0"></div>
<div class="a" style="left:158px;top:291px;width:242px;height:1px;background:#fff"></div>
<div class="a t k" style="left:177px;top:299px;"><i>复</i><i>制</i>(D)...</div>
<div class="a t k" style="left:177px;top:320px;"><i>应</i><i>用</i><i>图</i><i>像</i>(Y)...</div>
<div class="a t k" style="left:177px;top:341px;"><i>计</i><i>算</i>(C)...</div>
<div class="a" style="left:158px;top:362px;width:242px;height:1px;background:#a0a0a0"></div>
<div class="a" style="left:158px;top:363px;width:242px;height:1px;background:#fff"></div>
<div class="a t k" style="left:177px;top:371px;"><i>变</i><i>量</i>(B)</div>
<svg class="a" style="left:388px;top:375px;" width="4" height="7" viewBox="0 0 4 7"><path d="M0 0L4 3.500L0 7Z" fill="#000"/></svg>
<div class="a t d" style="left:177px;top:392px;"><i>应</i><i>用</i><i>数</i><i>据</i><i>组</i>(L)...</div>
<div class="a" style="left:158px;top:413px;width:242px;height:1px;background:#a0a0a0"></div>
<div class="a" style="left:158px;top:414px;width:242px;height:1px;background:#fff"></div>
<div class="a t d" style="left:177px;top:422px;"><i>陷</i><i>印</i>(T)...</div>
<div class="a" style="left:158px;top:443px;width:242px;height:1px;background:#a0a0a0"></div>
<div class="a" style="left:158px;top:444px;width:242px;height:1px;background:#fff"></div>
<div class="a t k" style="left:177px;top:452px;"><i>分</i><i>析</i>(A)</div>
<svg class="a" style="left:388px;top:456px;" width="4" height="7" viewBox="0 0 4 7"><path d="M0 0L4 3.500L0 7Z" fill="#000"/></svg>
<div class="a" style="left:398px;top:56px;width:223px;height:525px;background:#f0f0f0;border:1px solid #979797;box-shadow:3px 3px 3px rgba(0,0,0,.4)"></div>
<div class="a t k" style="left:420px;top:62px;"><i>亮</i><i>度</i>/<i>对</i><i>比</i><i>度</i>(C)...</div>
<div class="a t k" style="left:420px;top:83px;"><i>色</i><i>阶</i>(L)...</div>
<div class="a t k" style="right:1126.5px;top:83px;letter-spacing:.5px">Ctrl+L</div>
<div class="a t k" style="left:420px;top:104px;"><i>曲</i><i>线</i>(U)...</div>
<div class="a t k" style="right:1126.5px;top:104px;letter-spacing:.5px">Ctrl+M</div>
<div class="a t k" style="left:420px;top:125px;"><i>曝</i><i>光</i><i>度</i>(E)...</div>
<div class="a" style="left:401px;top:146px;width:217px;height:1px;background:#a0a0a0"></div>
<div class="a" style="left:401px;top:147px;width:217px;height:1px;background:#fff"></div>
<div class="a t k" style="left:420px;top:155px;"><i>自</i><i>然</i><i>饱</i><i>和</i><i>度</i>(V)...</div>
<div class="a t k" style="left:420px;top:176px;"><i>色</i><i>相</i>/<i>饱</i><i>和</i><i>度</i>(H)...</div>
<div class="a t k" style="right:1126.5px;top:176px;letter-spacing:.5px">Ctrl+U</div>
<div class="a t k" style="left:420px;top:197px;"><i>色</i><i>彩</i><i>平</i><i>衡</i>(B)...</div>
<div class="a t k" style="right:1126.5px;top:197px;letter-spacing:.5px">Ctrl+B</div>
<div class="a t k" style="left:420px;top:218px;"><i>黑</i><i>白</i>(K)...</div>
<div class="a t k" style="right:1126.5px;top:218px;letter-spacing:.5px">Alt+Shift+Ctrl+B</div>
<div class="a t k" style="left:420px;top:239px;"><i>照</i><i>片</i><i>滤</i><i>镜</i>(F)...</div>
<div class="a t k" style="left:420px;top:260px;"><i>通</i><i>道</i><i>混</i><i>合</i><i>器</i>(X)...</div>
<div class="a t k" style="left:420px;top:281px;"><i>颜</i><i>色</i><i>查</i><i>找</i>...</div>
<div class="a" style="left:401px;top:302px;width:217px;height:1px;background:#a0a0a0"></div>
<div class="a" style="left:401px;top:303px;width:217px;height:1px;background:#fff"></div>
<div class="a t k" style="left:420px;top:311px;"><i>反</i><i>相</i>(I)</div>
<div class="a t k" style="right:1126.5px;top:311px;letter-spacing:.5px">Ctrl+I</div>
<div class="a t k" style="left:420px;top:332px;"><i>色</i><i>调</i><i>分</i><i>离</i>(P)...</div>
<div class="a t k" style="left:420px;top:353px;"><i>阈</i><i>值</i>(T)...</div>
<div class="a t k" style="left:420px;top:374px;"><i>渐</i><i>变</i><i>映</i><i>射</i>(G)...</div>
<div class="a t k" style="left:420px;top:395px;"><i>可</i><i>选</i><i>颜</i><i>色</i>(S)...</div>
<div class="a" style="left:401px;top:416px;width:217px;height:1px;background:#a0a0a0"></div>
<div class="a" style="left:401px;top:417px;width:217px;height:1px;background:#fff"></div>
<div class="a t k" style="left:420px;top:425px;"><i>阴</i><i>影</i>/<i>高</i><i>光</i>(W)...</div>
<div class="a t k" style="left:420px;top:446px;">HDR <i>色</i><i>调</i>...</div>
<div class="a t k" style="left:420px;top:467px;"><i>变</i><i>化</i>...</div>
<div class="a" style="left:401px;top:488px;width:217px;height:1px;background:#a0a0a0"></div>
<div class="a" style="left:401px;top:489px;width:217px;height:1px;background:#fff"></div>
<div class="a t k" style="left:420px;top:497px;"><i>去</i><i>色</i>(D)</div>
<div class="a t k" style="right:1126.5px;top:497px;letter-spacing:.5px">Shift+Ctrl+U</div>
<div class="a t k" style="left:420px;top:518px;"><i>匹</i><i>配</i><i>颜</i><i>色</i>(M)...</div>
<div class="a" style="left:401px;top:536px;width:217px;height:21px;background:#0078d7"></div>
<div class="a t w" style="left:420px;top:539px;"><i>替</i><i>换</i><i>颜</i><i>色</i>(R)...</div>
<div class="a t k" style="left:420px;top:560px;"><i>色</i><i>调</i><i>均</i><i>化</i>(Q)</div>
<!-- p_annot -->
<svg class="a" style="left:0;top:0" width="1728" height="936" viewBox="0 0 1728 936"><defs><filter id="as" x="-10%" y="-10%" width="130%" height="130%"><feGaussianBlur stdDeviation="1.500"/></filter></defs><g fill="#000" opacity=".4" transform="translate(2.500,2.500)" filter="url(#as)"><path d="M105.2 88.6L144.9 43.7L145.3 50.2L157.0 26.0L135.0 41.5L141.5 40.8L103.8 87.4Z"/><path d="M89.7 171.6L160.8 94.8L161.1 101.3L173.5 77.5L151.1 92.3L157.6 91.8L88.3 170.4Z"/><path d="M562.5 486.7L500.1 526.0L501.6 519.6L483.5 539.5L509.0 530.9L502.5 529.7L563.5 488.3Z"/></g><g fill="#ff0a0a" stroke="#ff0a0a" stroke-width=".6" stroke-linejoin="round"><path d="M105.2 88.6L144.9 43.7L145.3 50.2L157.0 26.0L135.0 41.5L141.5 40.8L103.8 87.4Z"/><path d="M89.7 171.6L160.8 94.8L161.1 101.3L173.5 77.5L151.1 92.3L157.6 91.8L88.3 170.4Z"/><path d="M562.5 486.7L500.1 526.0L501.6 519.6L483.5 539.5L509.0 530.9L502.5 529.7L563.5 488.3Z"/></g></svg>
<div class="a" style="left:108px;top:11.5px;width:22px;height:22px;border-radius:50%;background:#fff;box-shadow:1px 2px 3px rgba(0,0,0,.5)"></div>
<div class="a" style="left:110.4px;top:13.9px;width:17.2px;height:17.2px;border-radius:50%;background:#0909f2"></div>
<div class="a t" style="left:110.5px;top:14.5px;width:17px;text-align:center;font-weight:bold;font-size:12.5px;color:#fff">1</div>
<div class="a" style="left:191px;top:94px;width:22px;height:22px;border-radius:50%;background:#fff;box-shadow:1px 2px 3px rgba(0,0,0,.5)"></div>
<div class="a" style="left:193.4px;top:96.4px;width:17.2px;height:17.2px;border-radius:50%;background:#0909f2"></div>
<div class="a t" style="left:193.5px;top:97px;width:17px;text-align:center;font-weight:bold;font-size:12.5px;color:#fff">2</div>
<div class="a" style="left:466.7px;top:490.5px;width:22px;height:22px;border-radius:50%;background:#fff;box-shadow:1px 2px 3px rgba(0,0,0,.5)"></div>
<div class="a" style="left:469.1px;top:492.9px;width:17.2px;height:17.2px;border-radius:50%;background:#0909f2"></div>
<div class="a t" style="left:469.2px;top:493.5px;width:17px;text-align:center;font-weight:bold;font-size:12.5px;color:#fff">3</div>
<!-- p_overlay -->
<div class="a t" style="left:1447px;top:925px;height:10px;overflow:hidden;font-size:20px;line-height:26px;color:#a2a2a2;letter-spacing:-.2px"><i>激</i><i>活</i> Windows</div>
<svg class="a" style="left:1556px;top:878px;" width="72" height="56" viewBox="0 0 72 56"><defs><linearGradient id="wb" x1="1" y1="0" x2="0" y2="1"><stop offset="0" stop-color="#1f97d6"/><stop offset=".5" stop-color="#1b6fbe"/><stop offset="1" stop-color="#1a4f9e"/></linearGradient><linearGradient id="wg" x1="1" y1="0" x2="0" y2="1"><stop offset="0" stop-color="#1c8a3c"/><stop offset=".55" stop-color="#3ea63c"/><stop offset="1" stop-color="#d2dc2c"/></linearGradient></defs>
<path d="M57.500 8C38 10 17 21 13.500 32C12 38 20 41 29 37.500C34 35.500 37.500 32 36 30C34.500 28 29 29.500 27 31C30.500 30.500 32.500 31.500 30.500 33C27 35.500 21 35.500 20.500 31.500C20 25 33 15 57.500 8Z" fill="url(#wb)" opacity=".9"/>
<path d="M30 26C36 22.500 47 22 52 25C56 28 52 34 44 39C36 44 24 47.500 16 47.500C24 46 33 42 38 37C43 32 44 28 41 27C38 26 33 26 30 26Z" fill="url(#wg)" opacity=".9"/></svg>
<div class="a t" style="left:1611px;top:885px;height:26px;font-size:21px;line-height:26px;font-weight:bold;color:#1c5ba4;opacity:.95;letter-spacing:0"><i>极</i><i>光</i><i>下</i><i>载</i><i>站</i></div>
<div class="a t" style="left:1613px;top:909px;height:22px;font-size:17px;line-height:22px;color:#2c9a4a;opacity:.92;letter-spacing:-.2px">www.xz7.com</div>
<div class="a" style="left:1546px;top:855px;width:190px;height:26px;background:#fff;border:1px solid #a9c9ee;border-radius:4px"></div>
<div class="a" style="left:1537px;top:853px;width:25px;height:25px;border-radius:4px;background:linear-gradient(160deg,#f87a34,#ee4a14);transform:rotate(-14deg)"></div>
<svg class="a" style="left:1539px;top:856px;" width="22" height="20" viewBox="0 0 22 20"><path d="M18.500 4.500C13 1.500 4.500 3 4.500 7.500C4.500 11.500 17 9 17.500 13C17.800 16.500 8 18 2.500 15" fill="none" stroke="#fff" stroke-width="3.600" stroke-linecap="round" transform="rotate(-14 11 10)"/></svg>
<div class="a t" style="left:1571px;top:858px;height:18px;line-height:18px;font-size:15px;font-weight:bold;color:#0a64dc"><i>中</i></div>
<svg class="a" style="left:1597px;top:862px;" width="13" height="13" viewBox="0 0 13 13"><circle cx="2.500" cy="2.500" r="1.700" fill="none" stroke="#0a64dc" stroke-width="1.300"/><path d="M9 6.500C11 6.500 11.500 9 8 12L7.300 11.200C8.800 9.800 8.800 9 8 9C6.800 9 6.800 6.500 9 6.500Z" fill="#0a64dc"/></svg>
<svg class="a" style="left:1621px;top:860px;" width="12" height="16" viewBox="0 0 12 16"><rect x="3.500" y="0" width="5" height="9.500" rx="2.500" fill="#0a64dc"/><path d="M1 6.500C1 13 11 13 11 6.500M6 11.500V14.500M3.500 15H8.500" fill="none" stroke="#0a64dc" stroke-width="1.500"/></svg>
<svg class="a" style="left:1644px;top:862px;" width="15" height="12" viewBox="0 0 15 12"><rect x=".8" y=".8" width="13.400" height="10.400" rx="1.500" fill="none" stroke="#0a64dc" stroke-width="1.600"/><path d="M3 3.500H4.500M6 3.500H7.500M9 3.500H10.500M3 6H4.500M6 6H7.500M9 6H10.500M4 8.500H11" stroke="#0a64dc" stroke-width="1.500"/></svg>
<svg class="a" style="left:1668px;top:861px;" width="15" height="14" viewBox="0 0 15 14"><path d="M4.500 0C5.500 1.800 9.500 1.800 10.500 0L15 2.500L13.500 6L11.800 5.300V14H3.200V5.300L1.500 6L0 2.500Z" fill="#0a64dc"/></svg>
<svg class="a" style="left:1692px;top:861px;" width="15" height="14" viewBox="0 0 15 14"><circle cx="3" cy="11" r="2.300" fill="none" stroke="#0a64dc" stroke-width="1.500"/><circle cx="12" cy="11" r="2.300" fill="none" stroke="#0a64dc" stroke-width="1.500"/><path d="M4.500 9.500L11.500 0M10.500 9.500L3.500 0" stroke="#0a64dc" stroke-width="1.700"/></svg>
<svg class="a" style="left:1717px;top:862px;" width="11" height="14" viewBox="0 0 11 14"><defs><linearGradient id="sg" x1="0" y1="0" x2="1" y2="1"><stop offset="0" stop-color="#9a6af0"/><stop offset="1" stop-color="#f070b0"/></linearGradient></defs><rect x="0" y="0" width="5.500" height="6" rx="1.500" fill="url(#sg)"/><rect x="7" y="0" width="5.500" height="6" rx="1.500" fill="#f06a6a"/><rect x="0" y="7.500" width="5.500" height="6" rx="1.500" fill="url(#sg)"/><rect x="7" y="7.500" width="5.500" height="6" rx="1.500" fill="url(#sg)"/></svg>
</body></html>
